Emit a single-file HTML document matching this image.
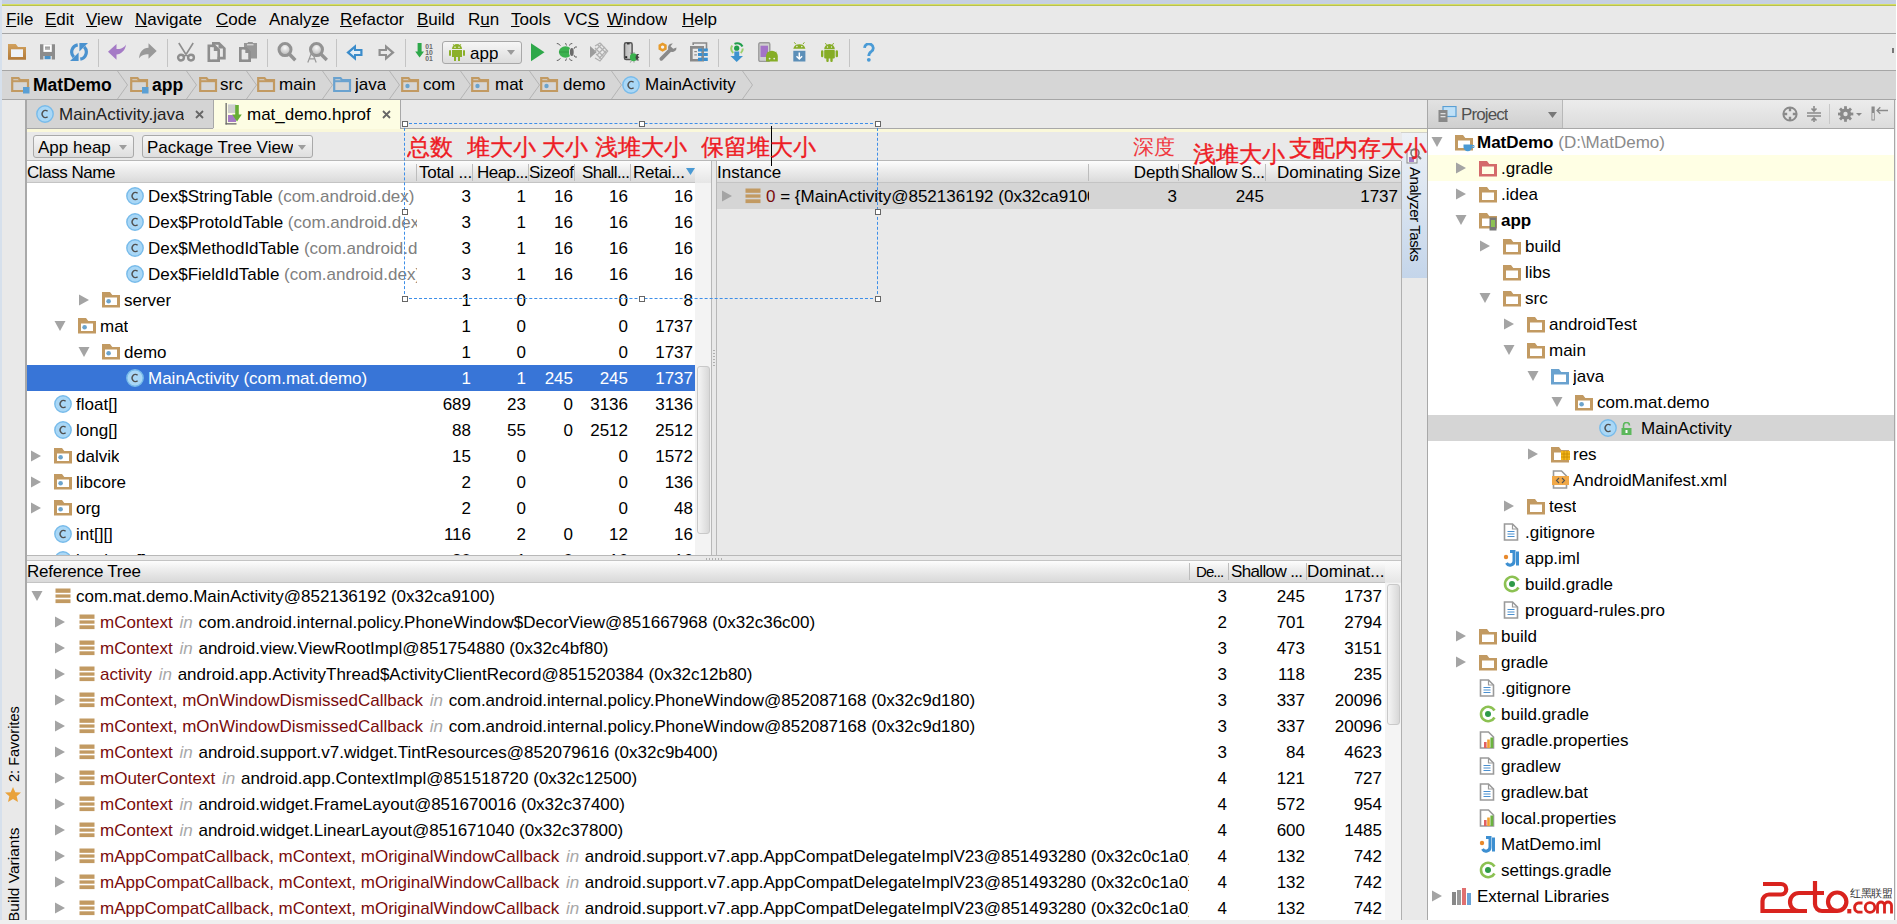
<!DOCTYPE html><html><head><meta charset="utf-8"><style>
html,body{margin:0;padding:0}
body{width:1897px;height:924px;overflow:hidden;position:relative;background:#e9e9e9;font-family:"Liberation Sans",sans-serif;font-size:17px;color:#000}
.a{position:absolute}
.t{position:absolute;white-space:nowrap;overflow:hidden}
u{text-decoration:underline;text-underline-offset:1px}
</style></head><body><div class="a" style="left:0px;top:0px;width:1897px;height:5px;background:#c6d0e2"></div><div class="a" style="left:2px;top:4px;width:1894px;height:1px;background:#d6df62"></div><div class="a" style="left:2px;top:5px;width:1894px;height:1px;background:#b8c052"></div><div class="a" style="left:0px;top:0px;width:2px;height:924px;background:#d6e0ec"></div><div class="a" style="left:1896px;top:0px;width:1px;height:924px;background:#ffffff"></div><div class="a" style="left:2px;top:6px;width:1894px;height:27px;background:#e9e9e9"></div><div class="a" style="left:2px;top:33px;width:1894px;height:1px;background:#a6a6a6"></div><div class="t" style="left:6px;top:6px;height:27px;line-height:27px;color:#000"><u>F</u>ile</div><div class="t" style="left:45px;top:6px;height:27px;line-height:27px;color:#000"><u>E</u>dit</div><div class="t" style="left:86px;top:6px;height:27px;line-height:27px;color:#000"><u>V</u>iew</div><div class="t" style="left:135px;top:6px;height:27px;line-height:27px;color:#000"><u>N</u>avigate</div><div class="t" style="left:216px;top:6px;height:27px;line-height:27px;color:#000"><u>C</u>ode</div><div class="t" style="left:269px;top:6px;height:27px;line-height:27px;color:#000">Analy<u>z</u>e</div><div class="t" style="left:340px;top:6px;height:27px;line-height:27px;color:#000"><u>R</u>efactor</div><div class="t" style="left:417px;top:6px;height:27px;line-height:27px;color:#000"><u>B</u>uild</div><div class="t" style="left:468px;top:6px;height:27px;line-height:27px;color:#000">R<u>u</u>n</div><div class="t" style="left:511px;top:6px;height:27px;line-height:27px;color:#000"><u>T</u>ools</div><div class="t" style="left:564px;top:6px;height:27px;line-height:27px;color:#000">VC<u>S</u></div><div class="t" style="left:607px;top:6px;height:27px;line-height:27px;color:#000"><u>W</u>indow</div><div class="t" style="left:682px;top:6px;height:27px;line-height:27px;color:#000"><u>H</u>elp</div><div class="a" style="left:2px;top:70px;width:1894px;height:1px;background:#a6a6a6"></div><div class="a" style="left:98px;top:39px;width:1px;height:28px;background:#c4c4c4"></div><div class="a" style="left:167px;top:39px;width:1px;height:28px;background:#c4c4c4"></div><div class="a" style="left:267px;top:39px;width:1px;height:28px;background:#c4c4c4"></div><div class="a" style="left:336px;top:39px;width:1px;height:28px;background:#c4c4c4"></div><div class="a" style="left:405px;top:39px;width:1px;height:28px;background:#c4c4c4"></div><div class="a" style="left:649px;top:39px;width:1px;height:28px;background:#c4c4c4"></div><div class="a" style="left:718px;top:39px;width:1px;height:28px;background:#c4c4c4"></div><div class="a" style="left:849px;top:39px;width:1px;height:28px;background:#c4c4c4"></div><div class="a" style="left:2px;top:71px;width:1894px;height:28px;background:#d6d6d6"></div><div class="a" style="left:2px;top:99px;width:1894px;height:1px;background:#a6a6a6"></div><div class="a" style="left:2px;top:100px;width:23px;height:820px;background:#e9e9e9"></div><svg class="a" style="left:8px;top:44px;" width="18" height="16" viewBox="0 0 18 16"><defs><linearGradient id="fg" x1="0" y1="0" x2="0" y2="1"><stop offset="0" stop-color="#d2a25e"/><stop offset="1" stop-color="#b27a3a"/></linearGradient></defs><path fill-rule="evenodd" d="M0 0 H7.8 L10 3 H18 V15.7 H0 Z M3 5.5 H15 V13 H3 Z" fill="url(#fg)"/><rect x="3" y="5.5" width="12" height="7.5" fill="#eef2f8"/></svg><svg class="a" style="left:40px;top:44px;" width="15" height="16" viewBox="0 0 15 16"><path d="M0 0.3 H15 V15.5 H11.8 V12 H3.4 V15.5 H0 Z" fill="#8c8c8c"/><rect x="3.4" y="0.3" width="8.4" height="7.6" fill="#fff"/><rect x="5" y="2.6" width="5" height="1.1" fill="#777"/><rect x="5" y="4.4" width="5" height="1.1" fill="#777"/><rect x="4.6" y="12" width="6" height="3.2" fill="#4a92c8"/></svg><svg class="a" style="left:70px;top:43px;" width="18" height="18" viewBox="0 0 18 18"><g stroke="#4a92cf" stroke-width="3.2" fill="none"><path d="M7.73 1.81 A7.3 7.3 0 0 0 3.84 14.16"/><path d="M10.27 16.19 A7.3 7.3 0 0 0 14.16 3.84"/></g><path d="M0 18 L8.6 18 L8.6 9.4 Z M18 0 L9.4 0 L9.4 8.6 Z" fill="#4a92cf"/></svg><svg class="a" style="left:108px;top:44px;" width="18" height="16" viewBox="0 0 18 16"><path d="M0 7.8 L8.5 0 V5.1 C12 5.1 16 4 18 0.4 C17.5 6 13 10.4 8.5 10.4 V15.7 Z" fill="#a57bc6"/></svg><svg class="a" style="left:139px;top:43px;" width="18" height="16" viewBox="0 0 18 16"><path d="M17.7 8 L9.5 0.2 V4.7 C4 4.7 0.5 9 0 15.5 C2 12.2 5 11.2 9.5 11.2 V15.8 Z" fill="#999"/></svg><svg class="a" style="left:176px;top:42px;" width="20" height="20" viewBox="0 0 20 20"><path d="M2.8 1 L10 12.5 M17.2 1 L10 12.5" stroke="#8e8e8e" stroke-width="1.6"/><circle cx="5" cy="15.6" r="2.9" fill="none" stroke="#8e8e8e" stroke-width="2.4"/><circle cx="15" cy="15.6" r="2.9" fill="none" stroke="#8e8e8e" stroke-width="2.4"/><path d="M7.3 13.6 L12.7 13.6" stroke="#8e8e8e" stroke-width="1.4"/></svg><svg class="a" style="left:207px;top:42px;" width="19" height="20" viewBox="0 0 19 20"><path fill-rule="evenodd" d="M5 0 H12.5 L18.7 6 V17.5 H5 Z M7.8 2.7 H11.5 V6.5 H15.9 V14.8 H7.8 Z" fill="#8e8e8e"/><path fill-rule="evenodd" d="M0.5 2.5 H8 L13 7.5 V20 H0.5 Z M3.3 5.2 H6.8 V9 H10.2 V17.3 H3.3 Z" fill="#8e8e8e"/><path d="M3.3 5.2 H6.8 V9 H10.2 V17.3 H3.3 Z" fill="#e9e9e9"/></svg><svg class="a" style="left:239px;top:42px;" width="18" height="20" viewBox="0 0 18 20"><rect x="5" y="1" width="13" height="15.5" fill="#979797"/><rect x="8.8" y="0" width="5" height="2.5" fill="#979797"/><rect x="8" y="2.3" width="6.5" height="1" fill="#e9e9e9"/><path fill-rule="evenodd" d="M0 5 H7.5 L12 9.5 V20 H0 Z M2.8 7.8 H6.3 V11 H9.2 V17.3 H2.8 Z" fill="#8e8e8e"/><path d="M2.8 7.8 H6.3 V11 H9.2 V17.3 H2.8 Z" fill="#e9e9e9"/></svg><svg class="a" style="left:277px;top:42px;" width="20" height="20" viewBox="0 0 20 20"><defs><radialGradient id="lg" cx="0.5" cy="0.35" r="0.6"><stop offset="0" stop-color="#fafafa"/><stop offset="1" stop-color="#b8b8b8"/></radialGradient></defs><circle cx="8" cy="7.6" r="6" fill="url(#lg)" stroke="#939393" stroke-width="3"/><path d="M12.3 12 L18.3 18.2" stroke="#939393" stroke-width="3.4"/></svg><svg class="a" style="left:307px;top:42px;" width="21" height="21" viewBox="0 0 21 21"><circle cx="9.5" cy="7.6" r="6" fill="url(#lg)" stroke="#939393" stroke-width="3"/><path d="M13.8 12 L19.8 18" stroke="#939393" stroke-width="3.4"/><path d="M0.8 20.5 L5 9.5 L9.2 20.5 M2.4 16.8 H7.6" fill="none" stroke="#9a9a9a" stroke-width="1.2"/></svg><svg class="a" style="left:346px;top:44px;" width="17" height="17" viewBox="0 0 17 17"><path d="M0.3 8.5 L10 0.3 V5 H16.5 V12 H10 V16.7 Z" fill="#3b8ccb"/><path d="M3.8 8.5 L8 4.9 V7 H14.3 V10 H8 V12.1 Z" fill="#e4eef6"/></svg><svg class="a" style="left:378px;top:44px;" width="17" height="17" viewBox="0 0 17 17"><path d="M16.7 8.5 L7 0.3 V5 H0.5 V12 H7 V16.7 Z" fill="#8f8f8f"/><path d="M13.2 8.5 L9 4.9 V7 H2.7 V10 H9 V12.1 Z" fill="#e9e9e9"/></svg><svg class="a" style="left:415px;top:42px;" width="20" height="20" viewBox="0 0 20 20"><path d="M2.6 1 H6.6 V9.5 H9 L4.6 15.5 L0.2 9.5 H2.6 Z" fill="#2ea84a"/><text x="10.2" y="6.8" font-size="6.8" font-weight="bold" fill="#6a6a6a" font-family="Liberation Sans">01</text><text x="10.2" y="13" font-size="6.8" font-weight="bold" fill="#6a6a6a" font-family="Liberation Sans">10</text><text x="10.2" y="19.2" font-size="6.8" font-weight="bold" fill="#6a6a6a" font-family="Liberation Sans">01</text></svg><div class="a" style="left:442px;top:41px;width:80px;height:23px;background:linear-gradient(#f6f6f6,#dcdcdc);border:1px solid #a8a8a8;border-radius:3px;box-sizing:border-box"></div><svg class="a" style="left:449px;top:43px;" width="16" height="18" viewBox="0 0 16 18"><g transform="scale(1.0,1.0)"><path d="M3 6 A5 5 0 0 1 13 6 Z" fill="#8cb02a"/><rect x="3" y="7" width="10" height="7" fill="#8cb02a"/><rect x="0" y="7" width="2" height="6" rx="1" fill="#8cb02a"/><rect x="14" y="7" width="2" height="6" rx="1" fill="#8cb02a"/><rect x="5" y="13" width="2" height="5" fill="#8cb02a"/><rect x="9" y="13" width="2" height="5" fill="#8cb02a"/><path d="M4 1 L5.5 3 M12 1 L10.5 3" stroke="#8cb02a" stroke-width="0.8"/><circle cx="6" cy="4.3" r="0.7" fill="#fff"/><circle cx="10" cy="4.3" r="0.7" fill="#fff"/></g></svg><div class="t" style="left:470px;top:41px;height:26px;line-height:26px;font-size:17px">app</div><svg class="a" style="left:507px;top:50px;" width="8" height="5" viewBox="0 0 8 5"><path d="M0 0 H8 L4 5 Z" fill="#9a9a9a"/></svg><svg class="a" style="left:531px;top:43px;" width="14" height="19" viewBox="0 0 14 19"><path d="M0 0.3 L13.5 9.3 L0 18.3 Z" fill="#2ea84a"/></svg><svg class="a" style="left:556px;top:42px;" width="22" height="20" viewBox="0 0 22 20"><g stroke="#555" stroke-width="0.9" fill="none"><path d="M4.5 3.5 L2 1.6 L0.8 1.6 M10.5 3.5 L9.5 1 M13 3.5 L15 1.6 L16.3 1.6 M4.5 16.5 L2 18.4 L0.8 18.4 M10.5 16.5 L9.5 19 M13 16.5 L15 18.4 L16.3 18.4 M21 5 L19 5 L17.5 7.5 M21 15 L19 15 L17.5 12.5"/></g><ellipse cx="9.5" cy="10" rx="6.6" ry="5.8" fill="#3bb14e"/><path d="M3 10 H14" stroke="#2a8a3a" stroke-width="0.6"/><ellipse cx="15.6" cy="10" rx="2.6" ry="4.6" fill="#e9e9e9"/><ellipse cx="15.8" cy="10" rx="1.9" ry="4" fill="#6a6a6a"/></svg><svg class="a" style="left:589px;top:42px;" width="20" height="20" viewBox="0 0 20 20"><path d="M1 3.9 L7.8 10 L1 16 Z" fill="#9c9c9c"/><g fill="none" stroke="#b0b0b0" stroke-width="1.2"><path d="M6 4 L11 1 L18.7 9 L11 19 L6 16"/><path d="M8.5 2.5 L17 11 M6 6 L15 15 M7 12 L13 17.5 M13 1.8 L5.5 9.5 M16 5 L8 13 M18 8 L10 16.5"/></g></svg><svg class="a" style="left:623px;top:42px;" width="17" height="21" viewBox="0 0 17 21"><defs><linearGradient id="pg" x1="0" y1="0" x2="1" y2="0"><stop offset="0" stop-color="#b8b8b8"/><stop offset="1" stop-color="#d8d8d8"/></linearGradient></defs><rect x="1.5" y="0.8" width="7.6" height="16.8" rx="1.6" fill="url(#pg)" stroke="#555" stroke-width="1.5"/><rect x="4" y="1.2" width="2.6" height="1.2" fill="#222"/><rect x="2.2" y="14.2" width="2" height="2" fill="#222"/><ellipse cx="10.5" cy="15.3" rx="3.6" ry="4" fill="#3bb14e"/><path d="M13.5 12.5 L15.8 12.5 M13.8 15.3 H16.2 M13.5 18 L15.8 18 M8 11.5 L7.5 10.8 M11 11 L11 10.5 M8 19.5 L7.5 20.3 M11 19.6 V20.3" stroke="#333" stroke-width="0.9"/><ellipse cx="14" cy="15.3" rx="1.4" ry="2.6" fill="#444"/></svg><svg class="a" style="left:658px;top:42px;" width="20" height="20" viewBox="0 0 20 20"><path d="M4.6 0.5 L8.7 2.8 V7.4 L4.6 9.7 L0.5 7.4 V2.8 Z" fill="#e79b2c"/><circle cx="4.6" cy="5.1" r="1.7" fill="#f5f5f5"/><path d="M18.5 5.5 A4.2 4.2 0 0 1 13 9.8 L4.6 18.2 A1.6 1.6 0 0 1 2 15.6 L10.3 7.2 A4.2 4.2 0 0 1 14.8 1.5 L12.5 4.3 L15.2 6.8 Z" fill="#8a8a8a"/></svg><svg class="a" style="left:690px;top:42px;" width="19" height="20" viewBox="0 0 19 20"><path d="M3.2 3 V1 H16.5 V8" fill="none" stroke="#8a8a8a" stroke-width="1.6"/><path fill-rule="evenodd" d="M0 4 H14 V19.5 H0 Z M2.7 6.7 H11.3 V17 H2.7 Z" fill="#8a8a8a"/><g fill="#3a8fcf"><rect x="8" y="6.5" width="4.3" height="3"/><rect x="13.5" y="6.5" width="4.3" height="3"/><rect x="8" y="11" width="4.3" height="3"/><rect x="13.5" y="11" width="4.3" height="3"/><rect x="8" y="15.7" width="4.3" height="3.3"/><rect x="13.5" y="15.7" width="4.3" height="3.3"/></g><rect x="4.3" y="9" width="2.6" height="1.2" fill="#8a8a8a"/><rect x="4.3" y="12.3" width="2.6" height="1.2" fill="#8a8a8a"/></svg><svg class="a" style="left:730px;top:42px;" width="14" height="20" viewBox="0 0 14 20"><path d="M3.3 11 A6 6 0 0 1 2.2 3.5" fill="none" stroke="#9bd06c" stroke-width="2"/><path d="M4.5 1.8 A6 6 0 0 1 12.5 4.5" fill="none" stroke="#1f9e4a" stroke-width="2"/><path d="M12.8 6.5 A6 6 0 0 1 10.7 11" fill="none" stroke="#9bd06c" stroke-width="2"/><circle cx="6.7" cy="6.2" r="2.6" fill="#1f9e4a"/><path d="M4.3 9.5 H9.2 V14 H13 L6.7 20 L0.5 14 H4.3 Z" fill="#3d93cf"/></svg><svg class="a" style="left:758px;top:42px;" width="21" height="20" viewBox="0 0 21 20"><rect x="0.8" y="0.8" width="11" height="18.6" rx="1.4" fill="#cfcfcf" stroke="#9a9a9a" stroke-width="1.4"/><rect x="2.5" y="3.7" width="7.5" height="11.3" fill="#a373c7"/><path d="M8 14 A5.5 5 0 0 1 19.8 14 V19.5 H8 Z" fill="#86ad26"/><path d="M9.6 9.8 L10.8 11.8 M18.2 9.8 L17 11.8" stroke="#86ad26" stroke-width="1"/><circle cx="11.6" cy="16.6" r="0.9" fill="#e9e9e9"/><circle cx="16.2" cy="16.6" r="0.9" fill="#e9e9e9"/></svg><svg class="a" style="left:793px;top:42px;" width="13" height="20" viewBox="0 0 13 20"><path d="M0.3 6.7 A6.2 5.6 0 0 1 12.4 6.7 Z" fill="#86ad26"/><path d="M1.3 0.3 L2.8 2.2 M11.4 0.3 L9.9 2.2" stroke="#86ad26" stroke-width="1"/><circle cx="3.9" cy="4.6" r="0.8" fill="#e9e9e9"/><circle cx="8.8" cy="4.6" r="0.8" fill="#e9e9e9"/><rect x="0.3" y="8.8" width="12.1" height="10.7" fill="#5c8fb8"/><path d="M6.3 10.5 V17 M3.5 14.2 L6.3 17 L9.1 14.2" fill="none" stroke="#fff" stroke-width="1.5"/></svg><svg class="a" style="left:821px;top:42px;" width="17" height="20" viewBox="0 0 17 20"><path d="M3.2 7.2 A5.3 5.3 0 0 1 13.8 7.2 Z" fill="#86ad26"/><path d="M4.3 1 L5.6 3 M12.7 1 L11.4 3" stroke="#86ad26" stroke-width="0.9"/><circle cx="6.5" cy="5" r="0.7" fill="#e9e9e9"/><circle cx="10.5" cy="5" r="0.7" fill="#e9e9e9"/><rect x="3.2" y="8" width="10.6" height="8.4" rx="0.8" fill="#86ad26"/><rect x="0" y="8.3" width="2.4" height="7" rx="1.2" fill="#86ad26"/><rect x="14.6" y="8.3" width="2.4" height="7" rx="1.2" fill="#86ad26"/><rect x="5.3" y="15.5" width="2.4" height="4.4" rx="1" fill="#86ad26"/><rect x="9.3" y="15.5" width="2.4" height="4.4" rx="1" fill="#86ad26"/></svg><svg class="a" style="left:863px;top:43px;" width="12" height="19" viewBox="0 0 12 19"><path d="M1.5 4.8 A4.4 4.2 0 1 1 8.2 8.6 C6.4 9.8 5.8 10.8 5.8 13" fill="none" stroke="#4a9bd6" stroke-width="2.8"/><circle cx="5.8" cy="16.8" r="1.9" fill="#4a9bd6"/></svg><div class="a" style="left:1892px;top:48px;width:2px;height:5px;background:#777"></div><svg class="a" style="left:11px;top:77px;" width="19" height="17" viewBox="0 0 19 17"><path d="M1.2 14 V1.2 H7.5 L9.2 3.2 H17 V14 Z" fill="none" stroke="#c29a62" stroke-width="2.2"/><rect x="1" y="3.2" width="16.5" height="2" fill="#c29a62"/><rect x="12" y="10" width="6.5" height="6.5" fill="#5a9fd4"/></svg><div class="t" style="left:33px;top:72px;height:26px;line-height:26px;font-weight:bold;font-size:17.5px">MatDemo</div><svg class="a" style="left:117px;top:71px;" width="12" height="28" viewBox="0 0 12 28"><path d="M0.5 0 L10.5 14 L0.5 28" fill="none" stroke="#b4b4b4" stroke-width="1"/></svg><svg class="a" style="left:130px;top:77px;" width="19" height="17" viewBox="0 0 19 17"><path d="M1.2 14 V1.2 H7.5 L9.2 3.2 H17 V14 Z" fill="none" stroke="#c29a62" stroke-width="2.2"/><rect x="1" y="3.2" width="16.5" height="2" fill="#c29a62"/><rect x="12" y="10" width="6.5" height="6.5" fill="#5a9fd4"/></svg><div class="t" style="left:152px;top:72px;height:26px;line-height:26px;font-weight:bold;font-size:17.5px">app</div><svg class="a" style="left:186px;top:71px;" width="12" height="28" viewBox="0 0 12 28"><path d="M0.5 0 L10.5 14 L0.5 28" fill="none" stroke="#b4b4b4" stroke-width="1"/></svg><svg class="a" style="left:199px;top:77px;" width="19" height="17" viewBox="0 0 19 17"><path d="M1.2 14 V1.2 H7.5 L9.2 3.2 H17 V14 Z" fill="none" stroke="#c29a62" stroke-width="2.2"/><rect x="1" y="3.2" width="16.5" height="2" fill="#c29a62"/></svg><div class="t" style="left:220px;top:72px;height:26px;line-height:26px;">src</div><svg class="a" style="left:246px;top:71px;" width="12" height="28" viewBox="0 0 12 28"><path d="M0.5 0 L10.5 14 L0.5 28" fill="none" stroke="#b4b4b4" stroke-width="1"/></svg><svg class="a" style="left:257px;top:77px;" width="19" height="17" viewBox="0 0 19 17"><path d="M1.2 14 V1.2 H7.5 L9.2 3.2 H17 V14 Z" fill="none" stroke="#c29a62" stroke-width="2.2"/><rect x="1" y="3.2" width="16.5" height="2" fill="#c29a62"/></svg><div class="t" style="left:279px;top:72px;height:26px;line-height:26px;">main</div><svg class="a" style="left:322px;top:71px;" width="12" height="28" viewBox="0 0 12 28"><path d="M0.5 0 L10.5 14 L0.5 28" fill="none" stroke="#b4b4b4" stroke-width="1"/></svg><svg class="a" style="left:333px;top:77px;" width="19" height="17" viewBox="0 0 19 17"><path d="M1.2 14 V1.2 H7.5 L9.2 3.2 H17 V14 Z" fill="none" stroke="#6aa2cf" stroke-width="2.2"/><rect x="1" y="3.2" width="16.5" height="2" fill="#6aa2cf"/></svg><div class="t" style="left:355px;top:72px;height:26px;line-height:26px;">java</div><svg class="a" style="left:389px;top:71px;" width="12" height="28" viewBox="0 0 12 28"><path d="M0.5 0 L10.5 14 L0.5 28" fill="none" stroke="#b4b4b4" stroke-width="1"/></svg><svg class="a" style="left:401px;top:77px;" width="19" height="17" viewBox="0 0 19 17"><path d="M1.2 14 V1.2 H7.5 L9.2 3.2 H17 V14 Z" fill="none" stroke="#c29a62" stroke-width="2.2"/><rect x="1" y="3.2" width="16.5" height="2" fill="#c29a62"/><circle cx="6.5" cy="9" r="2.2" fill="#6ba3cc"/></svg><div class="t" style="left:423px;top:72px;height:26px;line-height:26px;">com</div><svg class="a" style="left:460px;top:71px;" width="12" height="28" viewBox="0 0 12 28"><path d="M0.5 0 L10.5 14 L0.5 28" fill="none" stroke="#b4b4b4" stroke-width="1"/></svg><svg class="a" style="left:471px;top:77px;" width="19" height="17" viewBox="0 0 19 17"><path d="M1.2 14 V1.2 H7.5 L9.2 3.2 H17 V14 Z" fill="none" stroke="#c29a62" stroke-width="2.2"/><rect x="1" y="3.2" width="16.5" height="2" fill="#c29a62"/><circle cx="6.5" cy="9" r="2.2" fill="#6ba3cc"/></svg><div class="t" style="left:495px;top:72px;height:26px;line-height:26px;">mat</div><svg class="a" style="left:529px;top:71px;" width="12" height="28" viewBox="0 0 12 28"><path d="M0.5 0 L10.5 14 L0.5 28" fill="none" stroke="#b4b4b4" stroke-width="1"/></svg><svg class="a" style="left:540px;top:77px;" width="19" height="17" viewBox="0 0 19 17"><path d="M1.2 14 V1.2 H7.5 L9.2 3.2 H17 V14 Z" fill="none" stroke="#c29a62" stroke-width="2.2"/><rect x="1" y="3.2" width="16.5" height="2" fill="#c29a62"/><circle cx="6.5" cy="9" r="2.2" fill="#6ba3cc"/></svg><div class="t" style="left:563px;top:72px;height:26px;line-height:26px;">demo</div><svg class="a" style="left:611px;top:71px;" width="12" height="28" viewBox="0 0 12 28"><path d="M0.5 0 L10.5 14 L0.5 28" fill="none" stroke="#b4b4b4" stroke-width="1"/></svg><svg class="a" style="left:622px;top:76px;" width="18" height="18" viewBox="0 0 18 18"><circle cx="9" cy="9" r="8.2" fill="#a9d7f6" stroke="#78bbea" stroke-width="1.4"/><path d="M11.6 6.3 A3.3 3.6 0 1 0 11.6 11.7" fill="none" stroke="#505050" stroke-width="1.3"/></svg><div class="t" style="left:645px;top:72px;height:26px;line-height:26px;">MainActivity</div><svg class="a" style="left:742px;top:71px;" width="12" height="28" viewBox="0 0 12 28"><path d="M0.5 0 L10.5 14 L0.5 28" fill="none" stroke="#b4b4b4" stroke-width="1"/></svg><div class="a" style="left:26px;top:100px;width:1401px;height:28px;background:#e9e9e9"></div><div class="a" style="left:26px;top:100px;width:187px;height:28px;background:#d4d4d4"></div><div class="a" style="left:213px;top:100px;width:1px;height:28px;background:#a8a8a8"></div><div class="a" style="left:26px;top:128px;width:187px;height:1px;background:#a8a8a8"></div><div class="a" style="left:400px;top:128px;width:1027px;height:1px;background:#a8a8a8"></div><div class="a" style="left:214px;top:100px;width:186px;height:32px;background:#fdfde3"></div><div class="a" style="left:400px;top:100px;width:1px;height:29px;background:#a8a8a8"></div><div class="a" style="left:26px;top:129px;width:1401px;height:3px;background:#faf8da"></div><div class="a" style="left:26px;top:132px;width:1401px;height:1px;background:#d2d2cc"></div><svg class="a" style="left:36px;top:105px;" width="18" height="18" viewBox="0 0 18 18"><circle cx="9" cy="9" r="8.2" fill="#a9d7f6" stroke="#78bbea" stroke-width="1.4"/><path d="M11.6 6.3 A3.3 3.6 0 1 0 11.6 11.7" fill="none" stroke="#505050" stroke-width="1.3"/></svg><div class="t" style="left:59px;top:102px;height:26px;line-height:26px;color:#222">MainActivity.java</div><svg class="a" style="left:195px;top:110px;" width="9" height="9" viewBox="0 0 9 9"><path d="M1 1 L8 8 M8 1 L1 8" stroke="#666" stroke-width="1.8"/></svg><svg class="a" style="left:225px;top:103px;" width="18" height="22" viewBox="0 0 18 22"><rect x="0.5" y="0" width="1.3" height="21.5" fill="#6a6a6a"/><rect x="0.5" y="20.2" width="11" height="1.3" fill="#6a6a6a"/><rect x="3" y="1" width="8" height="9" fill="#cdcdcd"/><rect x="3" y="1" width="8" height="1" fill="#e0e0e0"/><path d="M3 12 H9 L11 14 V19 H3 Z" fill="#a57bc6"/><path d="M10.2 2 H13.8 V11.5 H16.8 L12 18.5 L7.2 11.5 H10.2 Z" fill="#67ad35"/></svg><div class="t" style="left:247px;top:102px;height:26px;line-height:26px;color:#000">mat_demo.hprof</div><svg class="a" style="left:382px;top:110px;" width="9" height="9" viewBox="0 0 9 9"><path d="M1 1 L8 8 M8 1 L1 8" stroke="#666" stroke-width="1.8"/></svg><div class="a" style="left:26px;top:132px;width:1375px;height:28px;background:#e9e9e9"></div><div class="a" style="left:26px;top:160px;width:1375px;height:1px;background:#b8b8b8"></div><div class="a" style="left:33px;top:135px;width:101px;height:23px;background:linear-gradient(#f7f7f7,#dedede);border:1px solid #a9a9a9;border-radius:3px;box-sizing:border-box"></div><div class="t" style="left:38px;top:135px;height:26px;line-height:26px;">App heap</div><svg class="a" style="left:119px;top:145px;" width="8" height="5" viewBox="0 0 8 5"><path d="M0 0 H8 L4 5 Z" fill="#9d9d9d"/></svg><div class="a" style="left:142px;top:135px;width:171px;height:23px;background:linear-gradient(#f7f7f7,#dedede);border:1px solid #a9a9a9;border-radius:3px;box-sizing:border-box"></div><div class="t" style="left:147px;top:135px;height:26px;line-height:26px;">Package Tree View</div><svg class="a" style="left:298px;top:145px;" width="8" height="5" viewBox="0 0 8 5"><path d="M0 0 H8 L4 5 Z" fill="#9d9d9d"/></svg><div class="a" style="left:26px;top:161px;width:669px;height:22px;background:linear-gradient(#fdfdfd,#ededed 40%,#d9d9d9)"></div><div class="a" style="left:26px;top:182px;width:669px;height:1px;background:#c4c4c4"></div><div class="a" style="left:26px;top:183px;width:669px;height:373px;background:#fff"></div><div class="t" style="left:27px;top:160px;height:26px;line-height:26px;letter-spacing:-0.46px">Class Name</div><div class="a" style="left:416px;top:164px;width:1px;height:17px;background:#bdbdbd"></div><div class="a" style="left:472px;top:164px;width:1px;height:17px;background:#bdbdbd"></div><div class="a" style="left:528px;top:164px;width:1px;height:17px;background:#bdbdbd"></div><div class="a" style="left:574px;top:164px;width:1px;height:17px;background:#bdbdbd"></div><div class="a" style="left:630px;top:164px;width:1px;height:17px;background:#bdbdbd"></div><div class="t" style="left:419px;top:160px;height:26px;line-height:26px;width:53px;letter-spacing:-0.2px">Total ...</div><div class="t" style="left:477px;top:160px;height:26px;line-height:26px;width:51px;letter-spacing:-0.55px">Heap...</div><div class="t" style="left:529px;top:160px;height:26px;line-height:26px;width:45px;letter-spacing:-0.47px">Sizeof</div><div class="t" style="left:582px;top:160px;height:26px;line-height:26px;width:48px;letter-spacing:-0.58px">Shall...</div><div class="t" style="left:633px;top:160px;height:26px;line-height:26px;letter-spacing:-0.27px">Retai...</div><svg class="a" style="left:686px;top:168px;" width="9" height="7" viewBox="0 0 9 7"><path d="M0 0 H9 L4.5 7 Z" fill="#4a9ad4"/></svg><div class="a" style="left:695px;top:161px;width:16px;height:22px;background:linear-gradient(#fbfbfb,#e6e6e6)"></div><div class="a" style="left:695px;top:183px;width:16px;height:373px;background:#f3f3f3"></div><div class="a" style="left:697px;top:366px;width:13px;height:168px;background:linear-gradient(90deg,#f5f5f5,#d8d8d8);border:1px solid #c9c9c9;border-radius:3px;box-sizing:border-box"></div><div class="a" style="left:711px;top:161px;width:1px;height:395px;background:#b8b8b8"></div><div class="a" style="left:716px;top:161px;width:1px;height:395px;background:#b8b8b8"></div><div class="a" style="left:713px;top:350px;width:2px;height:1px;background:#b0b0b0"></div><div class="a" style="left:713px;top:353px;width:2px;height:1px;background:#b0b0b0"></div><div class="a" style="left:713px;top:356px;width:2px;height:1px;background:#b0b0b0"></div><div class="a" style="left:713px;top:359px;width:2px;height:1px;background:#b0b0b0"></div><div class="a" style="left:713px;top:362px;width:2px;height:1px;background:#b0b0b0"></div><div class="a" style="left:713px;top:365px;width:2px;height:1px;background:#b0b0b0"></div><div class="a" style="left:26px;top:183px;width:391px;height:26px;overflow:hidden"><svg class="a" style="left:100px;top:4px;" width="18" height="18" viewBox="0 0 18 18"><circle cx="9" cy="9" r="8.2" fill="#a9d7f6" stroke="#78bbea" stroke-width="1.4"/><path d="M11.6 6.3 A3.3 3.6 0 1 0 11.6 11.7" fill="none" stroke="#505050" stroke-width="1.3"/></svg><div class="t" style="left:122px;top:1px;height:26px;line-height:26px;color:#000">Dex$StringTable<span style="color:#808080"> (com.android.dex)</span></div></div><div class="t" style="left:421px;top:184px;width:50px;height:26px;line-height:26px;text-align:right;color:#000">3</div><div class="t" style="left:476px;top:184px;width:50px;height:26px;line-height:26px;text-align:right;color:#000">1</div><div class="t" style="left:523px;top:184px;width:50px;height:26px;line-height:26px;text-align:right;color:#000">16</div><div class="t" style="left:578px;top:184px;width:50px;height:26px;line-height:26px;text-align:right;color:#000">16</div><div class="t" style="left:643px;top:184px;width:50px;height:26px;line-height:26px;text-align:right;color:#000">16</div><div class="a" style="left:26px;top:209px;width:391px;height:26px;overflow:hidden"><svg class="a" style="left:100px;top:4px;" width="18" height="18" viewBox="0 0 18 18"><circle cx="9" cy="9" r="8.2" fill="#a9d7f6" stroke="#78bbea" stroke-width="1.4"/><path d="M11.6 6.3 A3.3 3.6 0 1 0 11.6 11.7" fill="none" stroke="#505050" stroke-width="1.3"/></svg><div class="t" style="left:122px;top:1px;height:26px;line-height:26px;color:#000">Dex$ProtoIdTable<span style="color:#808080"> (com.android.dex)</span></div></div><div class="t" style="left:421px;top:210px;width:50px;height:26px;line-height:26px;text-align:right;color:#000">3</div><div class="t" style="left:476px;top:210px;width:50px;height:26px;line-height:26px;text-align:right;color:#000">1</div><div class="t" style="left:523px;top:210px;width:50px;height:26px;line-height:26px;text-align:right;color:#000">16</div><div class="t" style="left:578px;top:210px;width:50px;height:26px;line-height:26px;text-align:right;color:#000">16</div><div class="t" style="left:643px;top:210px;width:50px;height:26px;line-height:26px;text-align:right;color:#000">16</div><div class="a" style="left:26px;top:235px;width:391px;height:26px;overflow:hidden"><svg class="a" style="left:100px;top:4px;" width="18" height="18" viewBox="0 0 18 18"><circle cx="9" cy="9" r="8.2" fill="#a9d7f6" stroke="#78bbea" stroke-width="1.4"/><path d="M11.6 6.3 A3.3 3.6 0 1 0 11.6 11.7" fill="none" stroke="#505050" stroke-width="1.3"/></svg><div class="t" style="left:122px;top:1px;height:26px;line-height:26px;color:#000">Dex$MethodIdTable<span style="color:#808080"> (com.android.dex)</span></div></div><div class="t" style="left:421px;top:236px;width:50px;height:26px;line-height:26px;text-align:right;color:#000">3</div><div class="t" style="left:476px;top:236px;width:50px;height:26px;line-height:26px;text-align:right;color:#000">1</div><div class="t" style="left:523px;top:236px;width:50px;height:26px;line-height:26px;text-align:right;color:#000">16</div><div class="t" style="left:578px;top:236px;width:50px;height:26px;line-height:26px;text-align:right;color:#000">16</div><div class="t" style="left:643px;top:236px;width:50px;height:26px;line-height:26px;text-align:right;color:#000">16</div><div class="a" style="left:26px;top:261px;width:391px;height:26px;overflow:hidden"><svg class="a" style="left:100px;top:4px;" width="18" height="18" viewBox="0 0 18 18"><circle cx="9" cy="9" r="8.2" fill="#a9d7f6" stroke="#78bbea" stroke-width="1.4"/><path d="M11.6 6.3 A3.3 3.6 0 1 0 11.6 11.7" fill="none" stroke="#505050" stroke-width="1.3"/></svg><div class="t" style="left:122px;top:1px;height:26px;line-height:26px;color:#000">Dex$FieldIdTable<span style="color:#808080"> (com.android.dex)</span></div></div><div class="t" style="left:421px;top:262px;width:50px;height:26px;line-height:26px;text-align:right;color:#000">3</div><div class="t" style="left:476px;top:262px;width:50px;height:26px;line-height:26px;text-align:right;color:#000">1</div><div class="t" style="left:523px;top:262px;width:50px;height:26px;line-height:26px;text-align:right;color:#000">16</div><div class="t" style="left:578px;top:262px;width:50px;height:26px;line-height:26px;text-align:right;color:#000">16</div><div class="t" style="left:643px;top:262px;width:50px;height:26px;line-height:26px;text-align:right;color:#000">16</div><div class="a" style="left:26px;top:287px;width:391px;height:26px;overflow:hidden"><svg class="a" style="left:53px;top:7px;" width="10" height="12" viewBox="0 0 10 12"><path d="M0 0.5 L10 6 L0 11.5 Z" fill="#a4a4a4"/></svg><svg class="a" style="left:76px;top:5px;" width="18" height="16" viewBox="0 0 18 16"><path fill-rule="evenodd" d="M0 0 H8 L10.3 3 H18 V15.5 H0 Z M3 5.4 H15 V13 H3 Z" fill="#c29a62"/><circle cx="6.6" cy="9.3" r="2.3" fill="#6ba3cc"/></svg><div class="t" style="left:98px;top:1px;height:26px;line-height:26px;color:#000">server<span style="color:#808080"></span></div></div><div class="t" style="left:421px;top:288px;width:50px;height:26px;line-height:26px;text-align:right;color:#000">1</div><div class="t" style="left:476px;top:288px;width:50px;height:26px;line-height:26px;text-align:right;color:#000">0</div><div class="t" style="left:523px;top:288px;width:50px;height:26px;line-height:26px;text-align:right;color:#000"></div><div class="t" style="left:578px;top:288px;width:50px;height:26px;line-height:26px;text-align:right;color:#000">0</div><div class="t" style="left:643px;top:288px;width:50px;height:26px;line-height:26px;text-align:right;color:#000">8</div><div class="a" style="left:26px;top:313px;width:391px;height:26px;overflow:hidden"><svg class="a" style="left:28px;top:8px;" width="12" height="10" viewBox="0 0 12 10"><path d="M0.5 0 L11.5 0 L6 10 Z" fill="#a4a4a4"/></svg><svg class="a" style="left:52px;top:5px;" width="18" height="16" viewBox="0 0 18 16"><path fill-rule="evenodd" d="M0 0 H8 L10.3 3 H18 V15.5 H0 Z M3 5.4 H15 V13 H3 Z" fill="#c29a62"/><circle cx="6.6" cy="9.3" r="2.3" fill="#6ba3cc"/></svg><div class="t" style="left:74px;top:1px;height:26px;line-height:26px;color:#000">mat<span style="color:#808080"></span></div></div><div class="t" style="left:421px;top:314px;width:50px;height:26px;line-height:26px;text-align:right;color:#000">1</div><div class="t" style="left:476px;top:314px;width:50px;height:26px;line-height:26px;text-align:right;color:#000">0</div><div class="t" style="left:523px;top:314px;width:50px;height:26px;line-height:26px;text-align:right;color:#000"></div><div class="t" style="left:578px;top:314px;width:50px;height:26px;line-height:26px;text-align:right;color:#000">0</div><div class="t" style="left:643px;top:314px;width:50px;height:26px;line-height:26px;text-align:right;color:#000">1737</div><div class="a" style="left:26px;top:339px;width:391px;height:26px;overflow:hidden"><svg class="a" style="left:52px;top:8px;" width="12" height="10" viewBox="0 0 12 10"><path d="M0.5 0 L11.5 0 L6 10 Z" fill="#a4a4a4"/></svg><svg class="a" style="left:76px;top:5px;" width="18" height="16" viewBox="0 0 18 16"><path fill-rule="evenodd" d="M0 0 H8 L10.3 3 H18 V15.5 H0 Z M3 5.4 H15 V13 H3 Z" fill="#c29a62"/><circle cx="6.6" cy="9.3" r="2.3" fill="#6ba3cc"/></svg><div class="t" style="left:98px;top:1px;height:26px;line-height:26px;color:#000">demo<span style="color:#808080"></span></div></div><div class="t" style="left:421px;top:340px;width:50px;height:26px;line-height:26px;text-align:right;color:#000">1</div><div class="t" style="left:476px;top:340px;width:50px;height:26px;line-height:26px;text-align:right;color:#000">0</div><div class="t" style="left:523px;top:340px;width:50px;height:26px;line-height:26px;text-align:right;color:#000"></div><div class="t" style="left:578px;top:340px;width:50px;height:26px;line-height:26px;text-align:right;color:#000">0</div><div class="t" style="left:643px;top:340px;width:50px;height:26px;line-height:26px;text-align:right;color:#000">1737</div><div class="a" style="left:26px;top:365px;width:669px;height:26px;background:#3875d7"></div><div class="a" style="left:26px;top:365px;width:391px;height:26px;overflow:hidden"><svg class="a" style="left:100px;top:4px;" width="18" height="18" viewBox="0 0 18 18"><circle cx="9" cy="9" r="8.2" fill="#a9d7f6" stroke="#78bbea" stroke-width="1.4"/><path d="M11.6 6.3 A3.3 3.6 0 1 0 11.6 11.7" fill="none" stroke="#505050" stroke-width="1.3"/></svg><div class="t" style="left:122px;top:1px;height:26px;line-height:26px;color:#fff">MainActivity<span style="color:#fff"> (com.mat.demo)</span></div></div><div class="t" style="left:421px;top:366px;width:50px;height:26px;line-height:26px;text-align:right;color:#fff">1</div><div class="t" style="left:476px;top:366px;width:50px;height:26px;line-height:26px;text-align:right;color:#fff">1</div><div class="t" style="left:523px;top:366px;width:50px;height:26px;line-height:26px;text-align:right;color:#fff">245</div><div class="t" style="left:578px;top:366px;width:50px;height:26px;line-height:26px;text-align:right;color:#fff">245</div><div class="t" style="left:643px;top:366px;width:50px;height:26px;line-height:26px;text-align:right;color:#fff">1737</div><div class="a" style="left:26px;top:391px;width:391px;height:26px;overflow:hidden"><svg class="a" style="left:28px;top:4px;" width="18" height="18" viewBox="0 0 18 18"><circle cx="9" cy="9" r="8.2" fill="#a9d7f6" stroke="#78bbea" stroke-width="1.4"/><path d="M11.6 6.3 A3.3 3.6 0 1 0 11.6 11.7" fill="none" stroke="#505050" stroke-width="1.3"/></svg><div class="t" style="left:50px;top:1px;height:26px;line-height:26px;color:#000">float[]<span style="color:#808080"></span></div></div><div class="t" style="left:421px;top:392px;width:50px;height:26px;line-height:26px;text-align:right;color:#000">689</div><div class="t" style="left:476px;top:392px;width:50px;height:26px;line-height:26px;text-align:right;color:#000">23</div><div class="t" style="left:523px;top:392px;width:50px;height:26px;line-height:26px;text-align:right;color:#000">0</div><div class="t" style="left:578px;top:392px;width:50px;height:26px;line-height:26px;text-align:right;color:#000">3136</div><div class="t" style="left:643px;top:392px;width:50px;height:26px;line-height:26px;text-align:right;color:#000">3136</div><div class="a" style="left:26px;top:417px;width:391px;height:26px;overflow:hidden"><svg class="a" style="left:28px;top:4px;" width="18" height="18" viewBox="0 0 18 18"><circle cx="9" cy="9" r="8.2" fill="#a9d7f6" stroke="#78bbea" stroke-width="1.4"/><path d="M11.6 6.3 A3.3 3.6 0 1 0 11.6 11.7" fill="none" stroke="#505050" stroke-width="1.3"/></svg><div class="t" style="left:50px;top:1px;height:26px;line-height:26px;color:#000">long[]<span style="color:#808080"></span></div></div><div class="t" style="left:421px;top:418px;width:50px;height:26px;line-height:26px;text-align:right;color:#000">88</div><div class="t" style="left:476px;top:418px;width:50px;height:26px;line-height:26px;text-align:right;color:#000">55</div><div class="t" style="left:523px;top:418px;width:50px;height:26px;line-height:26px;text-align:right;color:#000">0</div><div class="t" style="left:578px;top:418px;width:50px;height:26px;line-height:26px;text-align:right;color:#000">2512</div><div class="t" style="left:643px;top:418px;width:50px;height:26px;line-height:26px;text-align:right;color:#000">2512</div><div class="a" style="left:26px;top:443px;width:391px;height:26px;overflow:hidden"><svg class="a" style="left:5px;top:7px;" width="10" height="12" viewBox="0 0 10 12"><path d="M0 0.5 L10 6 L0 11.5 Z" fill="#a4a4a4"/></svg><svg class="a" style="left:28px;top:5px;" width="18" height="16" viewBox="0 0 18 16"><path fill-rule="evenodd" d="M0 0 H8 L10.3 3 H18 V15.5 H0 Z M3 5.4 H15 V13 H3 Z" fill="#c29a62"/><circle cx="6.6" cy="9.3" r="2.3" fill="#6ba3cc"/></svg><div class="t" style="left:50px;top:1px;height:26px;line-height:26px;color:#000">dalvik<span style="color:#808080"></span></div></div><div class="t" style="left:421px;top:444px;width:50px;height:26px;line-height:26px;text-align:right;color:#000">15</div><div class="t" style="left:476px;top:444px;width:50px;height:26px;line-height:26px;text-align:right;color:#000">0</div><div class="t" style="left:523px;top:444px;width:50px;height:26px;line-height:26px;text-align:right;color:#000"></div><div class="t" style="left:578px;top:444px;width:50px;height:26px;line-height:26px;text-align:right;color:#000">0</div><div class="t" style="left:643px;top:444px;width:50px;height:26px;line-height:26px;text-align:right;color:#000">1572</div><div class="a" style="left:26px;top:469px;width:391px;height:26px;overflow:hidden"><svg class="a" style="left:5px;top:7px;" width="10" height="12" viewBox="0 0 10 12"><path d="M0 0.5 L10 6 L0 11.5 Z" fill="#a4a4a4"/></svg><svg class="a" style="left:28px;top:5px;" width="18" height="16" viewBox="0 0 18 16"><path fill-rule="evenodd" d="M0 0 H8 L10.3 3 H18 V15.5 H0 Z M3 5.4 H15 V13 H3 Z" fill="#c29a62"/><circle cx="6.6" cy="9.3" r="2.3" fill="#6ba3cc"/></svg><div class="t" style="left:50px;top:1px;height:26px;line-height:26px;color:#000">libcore<span style="color:#808080"></span></div></div><div class="t" style="left:421px;top:470px;width:50px;height:26px;line-height:26px;text-align:right;color:#000">2</div><div class="t" style="left:476px;top:470px;width:50px;height:26px;line-height:26px;text-align:right;color:#000">0</div><div class="t" style="left:523px;top:470px;width:50px;height:26px;line-height:26px;text-align:right;color:#000"></div><div class="t" style="left:578px;top:470px;width:50px;height:26px;line-height:26px;text-align:right;color:#000">0</div><div class="t" style="left:643px;top:470px;width:50px;height:26px;line-height:26px;text-align:right;color:#000">136</div><div class="a" style="left:26px;top:495px;width:391px;height:26px;overflow:hidden"><svg class="a" style="left:5px;top:7px;" width="10" height="12" viewBox="0 0 10 12"><path d="M0 0.5 L10 6 L0 11.5 Z" fill="#a4a4a4"/></svg><svg class="a" style="left:28px;top:5px;" width="18" height="16" viewBox="0 0 18 16"><path fill-rule="evenodd" d="M0 0 H8 L10.3 3 H18 V15.5 H0 Z M3 5.4 H15 V13 H3 Z" fill="#c29a62"/><circle cx="6.6" cy="9.3" r="2.3" fill="#6ba3cc"/></svg><div class="t" style="left:50px;top:1px;height:26px;line-height:26px;color:#000">org<span style="color:#808080"></span></div></div><div class="t" style="left:421px;top:496px;width:50px;height:26px;line-height:26px;text-align:right;color:#000">2</div><div class="t" style="left:476px;top:496px;width:50px;height:26px;line-height:26px;text-align:right;color:#000">0</div><div class="t" style="left:523px;top:496px;width:50px;height:26px;line-height:26px;text-align:right;color:#000"></div><div class="t" style="left:578px;top:496px;width:50px;height:26px;line-height:26px;text-align:right;color:#000">0</div><div class="t" style="left:643px;top:496px;width:50px;height:26px;line-height:26px;text-align:right;color:#000">48</div><div class="a" style="left:26px;top:521px;width:391px;height:26px;overflow:hidden"><svg class="a" style="left:28px;top:4px;" width="18" height="18" viewBox="0 0 18 18"><circle cx="9" cy="9" r="8.2" fill="#a9d7f6" stroke="#78bbea" stroke-width="1.4"/><path d="M11.6 6.3 A3.3 3.6 0 1 0 11.6 11.7" fill="none" stroke="#505050" stroke-width="1.3"/></svg><div class="t" style="left:50px;top:1px;height:26px;line-height:26px;color:#000">int[][]<span style="color:#808080"></span></div></div><div class="t" style="left:421px;top:522px;width:50px;height:26px;line-height:26px;text-align:right;color:#000">116</div><div class="t" style="left:476px;top:522px;width:50px;height:26px;line-height:26px;text-align:right;color:#000">2</div><div class="t" style="left:523px;top:522px;width:50px;height:26px;line-height:26px;text-align:right;color:#000">0</div><div class="t" style="left:578px;top:522px;width:50px;height:26px;line-height:26px;text-align:right;color:#000">12</div><div class="t" style="left:643px;top:522px;width:50px;height:26px;line-height:26px;text-align:right;color:#000">16</div><div class="a" style="left:26px;top:547px;width:391px;height:26px;overflow:hidden"><svg class="a" style="left:28px;top:4px;" width="18" height="18" viewBox="0 0 18 18"><circle cx="9" cy="9" r="8.2" fill="#a9d7f6" stroke="#78bbea" stroke-width="1.4"/><path d="M11.6 6.3 A3.3 3.6 0 1 0 11.6 11.7" fill="none" stroke="#505050" stroke-width="1.3"/></svg><div class="t" style="left:50px;top:1px;height:26px;line-height:26px;color:#000">boolean[]<span style="color:#808080"></span></div></div><div class="t" style="left:421px;top:548px;width:50px;height:26px;line-height:26px;text-align:right;color:#000">20</div><div class="t" style="left:476px;top:548px;width:50px;height:26px;line-height:26px;text-align:right;color:#000">1</div><div class="t" style="left:523px;top:548px;width:50px;height:26px;line-height:26px;text-align:right;color:#000">0</div><div class="t" style="left:578px;top:548px;width:50px;height:26px;line-height:26px;text-align:right;color:#000">16</div><div class="t" style="left:643px;top:548px;width:50px;height:26px;line-height:26px;text-align:right;color:#000">16</div><div class="a" style="left:26px;top:556px;width:685px;height:0px;"></div><div class="a" style="left:717px;top:161px;width:684px;height:395px;background:#e9e9e9"></div><div class="a" style="left:717px;top:161px;width:684px;height:22px;background:linear-gradient(#fdfdfd,#ededed 40%,#d9d9d9)"></div><div class="a" style="left:717px;top:182px;width:684px;height:1px;background:#c4c4c4"></div><div class="t" style="left:717px;top:160px;height:26px;line-height:26px;">Instance</div><div class="a" style="left:1088px;top:164px;width:1px;height:17px;background:#bdbdbd"></div><div class="a" style="left:1178px;top:164px;width:1px;height:17px;background:#bdbdbd"></div><div class="a" style="left:1265px;top:164px;width:1px;height:17px;background:#bdbdbd"></div><div class="t" style="left:1099px;top:160px;width:80px;height:26px;line-height:26px;text-align:right;">Depth</div><div class="t" style="left:1181px;top:160px;height:26px;line-height:26px;width:84px;letter-spacing:-0.53px">Shallow S...</div><div class="t" style="left:1277px;top:160px;height:26px;line-height:26px;">Dominating Size</div><div class="a" style="left:717px;top:183px;width:684px;height:26px;background:#d5d5d5"></div><svg class="a" style="left:722px;top:190px;" width="10" height="12" viewBox="0 0 10 12"><path d="M0 0.5 L10 6 L0 11.5 Z" fill="#a4a4a4"/></svg><svg class="a" style="left:745px;top:188px;" width="16" height="16" viewBox="0 0 16 16"><rect x="0.5" y="0.5" width="15" height="4.3" fill="#c29a62"/><rect x="0.5" y="6.4" width="15" height="3.3" fill="#c29a62"/><rect x="0.5" y="11.3" width="15" height="3.8" fill="#c29a62"/></svg><div class="a" style="left:717px;top:183px;width:372px;height:26px;overflow:hidden"><div class="t" style="left:49px;top:1px;height:26px;line-height:26px"><span style="color:#7a0c0c">0</span> = {MainActivity@852136192 (0x32ca9100)}</div></div><div class="t" style="left:1127px;top:184px;width:50px;height:26px;line-height:26px;text-align:right;">3</div><div class="t" style="left:1204px;top:184px;width:60px;height:26px;line-height:26px;text-align:right;">245</div><div class="t" style="left:1338px;top:184px;width:60px;height:26px;line-height:26px;text-align:right;">1737</div><div class="a" style="left:26px;top:555px;width:1375px;height:1px;background:#b8b8b8"></div><div class="a" style="left:26px;top:556px;width:1375px;height:4px;background:#e9e9e9"></div><div class="a" style="left:706px;top:558px;width:1px;height:2px;background:#b0b0b0"></div><div class="a" style="left:709px;top:558px;width:1px;height:2px;background:#b0b0b0"></div><div class="a" style="left:712px;top:558px;width:1px;height:2px;background:#b0b0b0"></div><div class="a" style="left:715px;top:558px;width:1px;height:2px;background:#b0b0b0"></div><div class="a" style="left:718px;top:558px;width:1px;height:2px;background:#b0b0b0"></div><div class="a" style="left:721px;top:558px;width:1px;height:2px;background:#b0b0b0"></div><div class="a" style="left:26px;top:560px;width:1375px;height:1px;background:#c4c4c4"></div><div class="a" style="left:26px;top:561px;width:1359px;height:21px;background:linear-gradient(#fdfdfd,#ededed 40%,#d9d9d9)"></div><div class="a" style="left:1385px;top:561px;width:16px;height:21px;background:linear-gradient(#fbfbfb,#e6e6e6)"></div><div class="a" style="left:26px;top:582px;width:1359px;height:1px;background:#c4c4c4"></div><div class="a" style="left:26px;top:583px;width:1359px;height:337px;background:#fff"></div><div class="a" style="left:1385px;top:583px;width:16px;height:337px;background:#f4f4f4"></div><div class="a" style="left:1387px;top:584px;width:13px;height:141px;background:linear-gradient(90deg,#f5f5f5,#d8d8d8);border:1px solid #c9c9c9;border-radius:3px;box-sizing:border-box"></div><div class="a" style="left:1401px;top:161px;width:1px;height:759px;background:#b0b0b0"></div><div class="t" style="left:27px;top:560px;height:24px;line-height:24px;letter-spacing:-0.25px">Reference Tree</div><div class="a" style="left:1189px;top:563px;width:1px;height:17px;background:#bdbdbd"></div><div class="a" style="left:1228px;top:563px;width:1px;height:17px;background:#bdbdbd"></div><div class="a" style="left:1306px;top:563px;width:1px;height:17px;background:#bdbdbd"></div><div class="t" style="left:1196px;top:560px;height:24px;line-height:24px;width:32px;font-size:15px;letter-spacing:-0.9px">De...</div><div class="t" style="left:1231px;top:560px;height:24px;line-height:24px;width:75px;letter-spacing:-0.64px">Shallow ...</div><div class="t" style="left:1307px;top:560px;height:24px;line-height:24px;">Dominat...</div><div class="a" style="left:26px;top:583px;width:1359px;height:337px;overflow:hidden"><svg class="a" style="left:5px;top:8px;" width="12" height="10" viewBox="0 0 12 10"><path d="M0.5 0 L11.5 0 L6 10 Z" fill="#a4a4a4"/></svg><svg class="a" style="left:29px;top:5px;" width="16" height="16" viewBox="0 0 16 16"><rect x="0.5" y="0.5" width="15" height="4.3" fill="#c29a62"/><rect x="0.5" y="6.4" width="15" height="3.3" fill="#c29a62"/><rect x="0.5" y="11.3" width="15" height="3.8" fill="#c29a62"/></svg><div class="t" style="left:50px;top:1px;height:26px;line-height:26px">com.mat.demo.MainActivity@852136192 (0x32ca9100)</div><svg class="a" style="left:29px;top:33px;" width="10" height="12" viewBox="0 0 10 12"><path d="M0 0.5 L10 6 L0 11.5 Z" fill="#a4a4a4"/></svg><svg class="a" style="left:53px;top:31px;" width="16" height="16" viewBox="0 0 16 16"><rect x="0.5" y="0.5" width="15" height="4.3" fill="#c29a62"/><rect x="0.5" y="6.4" width="15" height="3.3" fill="#c29a62"/><rect x="0.5" y="11.3" width="15" height="3.8" fill="#c29a62"/></svg><div class="t" style="left:74px;top:27px;height:26px;line-height:26px;width:1089px"><span style="color:#7a0c0c">mContext</span> <i style="color:#a8a8a8;margin:0 1px 0 2px">in</i> com.android.internal.policy.PhoneWindow$DecorView@851667968 (0x32c36c00)</div><svg class="a" style="left:29px;top:59px;" width="10" height="12" viewBox="0 0 10 12"><path d="M0 0.5 L10 6 L0 11.5 Z" fill="#a4a4a4"/></svg><svg class="a" style="left:53px;top:57px;" width="16" height="16" viewBox="0 0 16 16"><rect x="0.5" y="0.5" width="15" height="4.3" fill="#c29a62"/><rect x="0.5" y="6.4" width="15" height="3.3" fill="#c29a62"/><rect x="0.5" y="11.3" width="15" height="3.8" fill="#c29a62"/></svg><div class="t" style="left:74px;top:53px;height:26px;line-height:26px;width:1089px"><span style="color:#7a0c0c">mContext</span> <i style="color:#a8a8a8;margin:0 1px 0 2px">in</i> android.view.ViewRootImpl@851754880 (0x32c4bf80)</div><svg class="a" style="left:29px;top:85px;" width="10" height="12" viewBox="0 0 10 12"><path d="M0 0.5 L10 6 L0 11.5 Z" fill="#a4a4a4"/></svg><svg class="a" style="left:53px;top:83px;" width="16" height="16" viewBox="0 0 16 16"><rect x="0.5" y="0.5" width="15" height="4.3" fill="#c29a62"/><rect x="0.5" y="6.4" width="15" height="3.3" fill="#c29a62"/><rect x="0.5" y="11.3" width="15" height="3.8" fill="#c29a62"/></svg><div class="t" style="left:74px;top:79px;height:26px;line-height:26px;width:1089px"><span style="color:#7a0c0c">activity</span> <i style="color:#a8a8a8;margin:0 1px 0 2px">in</i> android.app.ActivityThread$ActivityClientRecord@851520384 (0x32c12b80)</div><svg class="a" style="left:29px;top:111px;" width="10" height="12" viewBox="0 0 10 12"><path d="M0 0.5 L10 6 L0 11.5 Z" fill="#a4a4a4"/></svg><svg class="a" style="left:53px;top:109px;" width="16" height="16" viewBox="0 0 16 16"><rect x="0.5" y="0.5" width="15" height="4.3" fill="#c29a62"/><rect x="0.5" y="6.4" width="15" height="3.3" fill="#c29a62"/><rect x="0.5" y="11.3" width="15" height="3.8" fill="#c29a62"/></svg><div class="t" style="left:74px;top:105px;height:26px;line-height:26px;width:1089px"><span style="color:#7a0c0c">mContext, mOnWindowDismissedCallback</span> <i style="color:#a8a8a8;margin:0 1px 0 2px">in</i> com.android.internal.policy.PhoneWindow@852087168 (0x32c9d180)</div><svg class="a" style="left:29px;top:137px;" width="10" height="12" viewBox="0 0 10 12"><path d="M0 0.5 L10 6 L0 11.5 Z" fill="#a4a4a4"/></svg><svg class="a" style="left:53px;top:135px;" width="16" height="16" viewBox="0 0 16 16"><rect x="0.5" y="0.5" width="15" height="4.3" fill="#c29a62"/><rect x="0.5" y="6.4" width="15" height="3.3" fill="#c29a62"/><rect x="0.5" y="11.3" width="15" height="3.8" fill="#c29a62"/></svg><div class="t" style="left:74px;top:131px;height:26px;line-height:26px;width:1089px"><span style="color:#7a0c0c">mContext, mOnWindowDismissedCallback</span> <i style="color:#a8a8a8;margin:0 1px 0 2px">in</i> com.android.internal.policy.PhoneWindow@852087168 (0x32c9d180)</div><svg class="a" style="left:29px;top:163px;" width="10" height="12" viewBox="0 0 10 12"><path d="M0 0.5 L10 6 L0 11.5 Z" fill="#a4a4a4"/></svg><svg class="a" style="left:53px;top:161px;" width="16" height="16" viewBox="0 0 16 16"><rect x="0.5" y="0.5" width="15" height="4.3" fill="#c29a62"/><rect x="0.5" y="6.4" width="15" height="3.3" fill="#c29a62"/><rect x="0.5" y="11.3" width="15" height="3.8" fill="#c29a62"/></svg><div class="t" style="left:74px;top:157px;height:26px;line-height:26px;width:1089px"><span style="color:#7a0c0c">mContext</span> <i style="color:#a8a8a8;margin:0 1px 0 2px">in</i> android.support.v7.widget.TintResources@852079616 (0x32c9b400)</div><svg class="a" style="left:29px;top:189px;" width="10" height="12" viewBox="0 0 10 12"><path d="M0 0.5 L10 6 L0 11.5 Z" fill="#a4a4a4"/></svg><svg class="a" style="left:53px;top:187px;" width="16" height="16" viewBox="0 0 16 16"><rect x="0.5" y="0.5" width="15" height="4.3" fill="#c29a62"/><rect x="0.5" y="6.4" width="15" height="3.3" fill="#c29a62"/><rect x="0.5" y="11.3" width="15" height="3.8" fill="#c29a62"/></svg><div class="t" style="left:74px;top:183px;height:26px;line-height:26px;width:1089px"><span style="color:#7a0c0c">mOuterContext</span> <i style="color:#a8a8a8;margin:0 1px 0 2px">in</i> android.app.ContextImpl@851518720 (0x32c12500)</div><svg class="a" style="left:29px;top:215px;" width="10" height="12" viewBox="0 0 10 12"><path d="M0 0.5 L10 6 L0 11.5 Z" fill="#a4a4a4"/></svg><svg class="a" style="left:53px;top:213px;" width="16" height="16" viewBox="0 0 16 16"><rect x="0.5" y="0.5" width="15" height="4.3" fill="#c29a62"/><rect x="0.5" y="6.4" width="15" height="3.3" fill="#c29a62"/><rect x="0.5" y="11.3" width="15" height="3.8" fill="#c29a62"/></svg><div class="t" style="left:74px;top:209px;height:26px;line-height:26px;width:1089px"><span style="color:#7a0c0c">mContext</span> <i style="color:#a8a8a8;margin:0 1px 0 2px">in</i> android.widget.FrameLayout@851670016 (0x32c37400)</div><svg class="a" style="left:29px;top:241px;" width="10" height="12" viewBox="0 0 10 12"><path d="M0 0.5 L10 6 L0 11.5 Z" fill="#a4a4a4"/></svg><svg class="a" style="left:53px;top:239px;" width="16" height="16" viewBox="0 0 16 16"><rect x="0.5" y="0.5" width="15" height="4.3" fill="#c29a62"/><rect x="0.5" y="6.4" width="15" height="3.3" fill="#c29a62"/><rect x="0.5" y="11.3" width="15" height="3.8" fill="#c29a62"/></svg><div class="t" style="left:74px;top:235px;height:26px;line-height:26px;width:1089px"><span style="color:#7a0c0c">mContext</span> <i style="color:#a8a8a8;margin:0 1px 0 2px">in</i> android.widget.LinearLayout@851671040 (0x32c37800)</div><svg class="a" style="left:29px;top:267px;" width="10" height="12" viewBox="0 0 10 12"><path d="M0 0.5 L10 6 L0 11.5 Z" fill="#a4a4a4"/></svg><svg class="a" style="left:53px;top:265px;" width="16" height="16" viewBox="0 0 16 16"><rect x="0.5" y="0.5" width="15" height="4.3" fill="#c29a62"/><rect x="0.5" y="6.4" width="15" height="3.3" fill="#c29a62"/><rect x="0.5" y="11.3" width="15" height="3.8" fill="#c29a62"/></svg><div class="t" style="left:74px;top:261px;height:26px;line-height:26px;width:1089px"><span style="color:#7a0c0c">mAppCompatCallback, mContext, mOriginalWindowCallback</span> <i style="color:#a8a8a8;margin:0 1px 0 2px">in</i> android.support.v7.app.AppCompatDelegateImplV23@851493280 (0x32c0c1a0)</div><svg class="a" style="left:29px;top:293px;" width="10" height="12" viewBox="0 0 10 12"><path d="M0 0.5 L10 6 L0 11.5 Z" fill="#a4a4a4"/></svg><svg class="a" style="left:53px;top:291px;" width="16" height="16" viewBox="0 0 16 16"><rect x="0.5" y="0.5" width="15" height="4.3" fill="#c29a62"/><rect x="0.5" y="6.4" width="15" height="3.3" fill="#c29a62"/><rect x="0.5" y="11.3" width="15" height="3.8" fill="#c29a62"/></svg><div class="t" style="left:74px;top:287px;height:26px;line-height:26px;width:1089px"><span style="color:#7a0c0c">mAppCompatCallback, mContext, mOriginalWindowCallback</span> <i style="color:#a8a8a8;margin:0 1px 0 2px">in</i> android.support.v7.app.AppCompatDelegateImplV23@851493280 (0x32c0c1a0)</div><svg class="a" style="left:29px;top:319px;" width="10" height="12" viewBox="0 0 10 12"><path d="M0 0.5 L10 6 L0 11.5 Z" fill="#a4a4a4"/></svg><svg class="a" style="left:53px;top:317px;" width="16" height="16" viewBox="0 0 16 16"><rect x="0.5" y="0.5" width="15" height="4.3" fill="#c29a62"/><rect x="0.5" y="6.4" width="15" height="3.3" fill="#c29a62"/><rect x="0.5" y="11.3" width="15" height="3.8" fill="#c29a62"/></svg><div class="t" style="left:74px;top:313px;height:26px;line-height:26px;width:1089px"><span style="color:#7a0c0c">mAppCompatCallback, mContext, mOriginalWindowCallback</span> <i style="color:#a8a8a8;margin:0 1px 0 2px">in</i> android.support.v7.app.AppCompatDelegateImplV23@851493280 (0x32c0c1a0)</div></div><div class="t" style="left:1187px;top:584px;width:40px;height:26px;line-height:26px;text-align:right;">3</div><div class="t" style="left:1245px;top:584px;width:60px;height:26px;line-height:26px;text-align:right;">245</div><div class="t" style="left:1312px;top:584px;width:70px;height:26px;line-height:26px;text-align:right;">1737</div><div class="t" style="left:1187px;top:610px;width:40px;height:26px;line-height:26px;text-align:right;">2</div><div class="t" style="left:1245px;top:610px;width:60px;height:26px;line-height:26px;text-align:right;">701</div><div class="t" style="left:1312px;top:610px;width:70px;height:26px;line-height:26px;text-align:right;">2794</div><div class="t" style="left:1187px;top:636px;width:40px;height:26px;line-height:26px;text-align:right;">3</div><div class="t" style="left:1245px;top:636px;width:60px;height:26px;line-height:26px;text-align:right;">473</div><div class="t" style="left:1312px;top:636px;width:70px;height:26px;line-height:26px;text-align:right;">3151</div><div class="t" style="left:1187px;top:662px;width:40px;height:26px;line-height:26px;text-align:right;">3</div><div class="t" style="left:1245px;top:662px;width:60px;height:26px;line-height:26px;text-align:right;">118</div><div class="t" style="left:1312px;top:662px;width:70px;height:26px;line-height:26px;text-align:right;">235</div><div class="t" style="left:1187px;top:688px;width:40px;height:26px;line-height:26px;text-align:right;">3</div><div class="t" style="left:1245px;top:688px;width:60px;height:26px;line-height:26px;text-align:right;">337</div><div class="t" style="left:1312px;top:688px;width:70px;height:26px;line-height:26px;text-align:right;">20096</div><div class="t" style="left:1187px;top:714px;width:40px;height:26px;line-height:26px;text-align:right;">3</div><div class="t" style="left:1245px;top:714px;width:60px;height:26px;line-height:26px;text-align:right;">337</div><div class="t" style="left:1312px;top:714px;width:70px;height:26px;line-height:26px;text-align:right;">20096</div><div class="t" style="left:1187px;top:740px;width:40px;height:26px;line-height:26px;text-align:right;">3</div><div class="t" style="left:1245px;top:740px;width:60px;height:26px;line-height:26px;text-align:right;">84</div><div class="t" style="left:1312px;top:740px;width:70px;height:26px;line-height:26px;text-align:right;">4623</div><div class="t" style="left:1187px;top:766px;width:40px;height:26px;line-height:26px;text-align:right;">4</div><div class="t" style="left:1245px;top:766px;width:60px;height:26px;line-height:26px;text-align:right;">121</div><div class="t" style="left:1312px;top:766px;width:70px;height:26px;line-height:26px;text-align:right;">727</div><div class="t" style="left:1187px;top:792px;width:40px;height:26px;line-height:26px;text-align:right;">4</div><div class="t" style="left:1245px;top:792px;width:60px;height:26px;line-height:26px;text-align:right;">572</div><div class="t" style="left:1312px;top:792px;width:70px;height:26px;line-height:26px;text-align:right;">954</div><div class="t" style="left:1187px;top:818px;width:40px;height:26px;line-height:26px;text-align:right;">4</div><div class="t" style="left:1245px;top:818px;width:60px;height:26px;line-height:26px;text-align:right;">600</div><div class="t" style="left:1312px;top:818px;width:70px;height:26px;line-height:26px;text-align:right;">1485</div><div class="t" style="left:1187px;top:844px;width:40px;height:26px;line-height:26px;text-align:right;">4</div><div class="t" style="left:1245px;top:844px;width:60px;height:26px;line-height:26px;text-align:right;">132</div><div class="t" style="left:1312px;top:844px;width:70px;height:26px;line-height:26px;text-align:right;">742</div><div class="t" style="left:1187px;top:870px;width:40px;height:26px;line-height:26px;text-align:right;">4</div><div class="t" style="left:1245px;top:870px;width:60px;height:26px;line-height:26px;text-align:right;">132</div><div class="t" style="left:1312px;top:870px;width:70px;height:26px;line-height:26px;text-align:right;">742</div><div class="t" style="left:1187px;top:896px;width:40px;height:25px;line-height:25px;text-align:right;">4</div><div class="t" style="left:1245px;top:896px;width:60px;height:25px;line-height:25px;text-align:right;">132</div><div class="t" style="left:1312px;top:896px;width:70px;height:25px;line-height:25px;text-align:right;">742</div><div class="a" style="left:1402px;top:133px;width:25px;height:787px;background:#e9e9e9"></div><div class="a" style="left:1402px;top:133px;width:25px;height:145px;background:linear-gradient(#edf1f6,#c4d5ea)"></div><div class="a" style="left:1427px;top:100px;width:1px;height:820px;background:#a8a8a8"></div><svg class="a" style="left:1406px;top:147px;" width="16" height="17" viewBox="0 0 16 17"><rect x="1" y="3" width="10" height="13" fill="#f4f4f4" stroke="#888" stroke-width="1"/><rect x="3" y="10" width="5" height="5" fill="#a37cc8"/><circle cx="9" cy="6" r="4" fill="none" stroke="#777" stroke-width="1.6"/><path d="M12 9 L15 12" stroke="#777" stroke-width="2"/></svg><div class="t" style="left:1405px;top:167px;width:20px;height:110px;writing-mode:vertical-rl;line-height:20px;font-size:15px;letter-spacing:-0.45px">Analyzer Tasks</div><div class="t" style="left:5px;top:705px;width:18px;height:77px;writing-mode:vertical-rl;transform:rotate(180deg);line-height:18px;font-size:14.5px"><u>2</u>: Favorites</div><svg class="a" style="left:5px;top:787px;" width="16" height="15" viewBox="0 0 16 15"><path d="M8 0 L10.3 5.2 L16 5.6 L11.7 9.3 L13 15 L8 12 L3 15 L4.3 9.3 L0 5.6 L5.7 5.2 Z" fill="#e9a23b"/></svg><div class="t" style="left:5px;top:828px;width:18px;height:100px;writing-mode:vertical-rl;transform:rotate(180deg);line-height:18px;font-size:15.5px;text-align:right">Build Variants</div><div class="a" style="left:1428px;top:100px;width:466px;height:28px;background:linear-gradient(#ececec,#dcdcdc)"></div><div class="a" style="left:1428px;top:128px;width:466px;height:1px;background:#a8a8a8"></div><div class="a" style="left:1428px;top:100px;width:134px;height:28px;background:linear-gradient(#e2e2e2,#cfcfcf)"></div><div class="a" style="left:1562px;top:100px;width:1px;height:28px;background:#b8b8b8"></div><svg class="a" style="left:1438px;top:106px;" width="19" height="17" viewBox="0 0 19 17"><rect x="5" y="0.5" width="13" height="10" fill="#bfe0f7" stroke="#5a9fd4" stroke-width="1.2"/><rect x="0.5" y="4" width="9" height="12" fill="#888"/><rect x="2.5" y="7" width="5" height="1.3" fill="#ddd"/><rect x="2.5" y="10" width="5" height="1.3" fill="#ddd"/></svg><div class="t" style="left:1461px;top:102px;height:26px;line-height:26px;color:#505050;letter-spacing:-0.9px">Project</div><svg class="a" style="left:1548px;top:112px;" width="9" height="6" viewBox="0 0 9 6"><path d="M0 0 H9 L4.5 6 Z" fill="#777"/></svg><svg class="a" style="left:1782px;top:106px;" width="16" height="16" viewBox="0 0 16 16"><circle cx="8" cy="8" r="6.6" fill="none" stroke="#8a8a8a" stroke-width="2"/><path d="M8 1.5 V5.2 M8 10.8 V14.5 M1.5 8 H5.2 M10.8 8 H14.5" stroke="#8a8a8a" stroke-width="2.4"/></svg><svg class="a" style="left:1807px;top:106px;" width="14" height="16" viewBox="0 0 14 16"><path d="M0 7 H14 M0 10 H14 M7 0 V5 M4.5 2.5 L7 5 L9.5 2.5 M7 16 V12 M4.5 14.5 L7 12 L9.5 14.5" fill="none" stroke="#8a8a8a" stroke-width="1.6"/></svg><div class="a" style="left:1829px;top:104px;width:1px;height:20px;background:#c8c8c8"></div><svg class="a" style="left:1838px;top:106px;" width="24" height="16" viewBox="0 0 24 16"><g transform="translate(7.5,8)" fill="#8a8a8a"><rect x="-1.4" y="-7.8" width="2.8" height="15.6"/><rect x="-1.4" y="-7.8" width="2.8" height="15.6" transform="rotate(45)"/><rect x="-1.4" y="-7.8" width="2.8" height="15.6" transform="rotate(90)"/><rect x="-1.4" y="-7.8" width="2.8" height="15.6" transform="rotate(135)"/><circle r="5.6"/><circle r="2.2" fill="#e2e2e2"/></g><path d="M18 7 H24 L21 10 Z" fill="#8a8a8a"/></svg><svg class="a" style="left:1871px;top:106px;" width="17" height="16" viewBox="0 0 17 16"><rect x="0.5" y="0.5" width="3.2" height="14" fill="#8a8a8a"/><rect x="1.4" y="7" width="1.4" height="6.5" fill="#f0f0f0"/><path d="M6 4.5 H17 M9.3 1.2 L6 4.5 L9.3 7.8" fill="none" stroke="#8a8a8a" stroke-width="1.3"/></svg><div class="a" style="left:1428px;top:129px;width:466px;height:791px;background:#fff"></div><div class="a" style="left:1894px;top:100px;width:1px;height:820px;background:#a8a8a8"></div><div class="a" style="left:1895px;top:100px;width:1px;height:820px;background:#e9e9e9"></div><svg class="a" style="left:1431px;top:137px;" width="12" height="10" viewBox="0 0 12 10"><path d="M0.5 0 L11.5 0 L6 10 Z" fill="#a4a4a4"/></svg><svg class="a" style="left:1455px;top:135px;" width="18" height="16" viewBox="0 0 18 16"><path fill-rule="evenodd" d="M0 0 H8 L10.3 3 H18 V15.5 H0 Z M3 5.4 H15 V13 H3 Z" fill="#c29a62"/></svg><svg class="a" style="left:1463px;top:144px;" width="12" height="8" viewBox="0 0 12 8"><path d="M0.5 0.5 H9 V3 A4 4 0 0 1 0.5 3 Z" fill="#4a9ad4"/><path d="M9 1.5 H11 V3.5 H9" fill="none" stroke="#4a9ad4" stroke-width="1"/></svg><div class="t" style="left:1477px;top:130px;height:26px;line-height:26px;font-weight:bold;">MatDemo<span style="color:#8a8a8a;font-weight:normal"> (D:\MatDemo)</span></div><div class="a" style="left:1428px;top:155px;width:466px;height:26px;background:#ffffe4"></div><svg class="a" style="left:1456px;top:162px;" width="10" height="12" viewBox="0 0 10 12"><path d="M0 0.5 L10 6 L0 11.5 Z" fill="#a4a4a4"/></svg><svg class="a" style="left:1479px;top:161px;" width="18" height="16" viewBox="0 0 18 16"><path fill-rule="evenodd" d="M0 0 H8 L10.3 3 H18 V15.5 H0 Z M3 5.4 H15 V13 H3 Z" fill="#d46a6a"/></svg><div class="t" style="left:1501px;top:156px;height:26px;line-height:26px;">.gradle</div><svg class="a" style="left:1456px;top:188px;" width="10" height="12" viewBox="0 0 10 12"><path d="M0 0.5 L10 6 L0 11.5 Z" fill="#a4a4a4"/></svg><svg class="a" style="left:1479px;top:187px;" width="18" height="16" viewBox="0 0 18 16"><path fill-rule="evenodd" d="M0 0 H8 L10.3 3 H18 V15.5 H0 Z M3 5.4 H15 V13 H3 Z" fill="#c29a62"/></svg><div class="t" style="left:1501px;top:182px;height:26px;line-height:26px;">.idea</div><svg class="a" style="left:1455px;top:215px;" width="12" height="10" viewBox="0 0 12 10"><path d="M0.5 0 L11.5 0 L6 10 Z" fill="#a4a4a4"/></svg><svg class="a" style="left:1479px;top:213px;" width="18" height="16" viewBox="0 0 18 16"><path fill-rule="evenodd" d="M0 0 H8 L10.3 3 H18 V15.5 H0 Z M3 5.4 H15 V13 H3 Z" fill="#c29a62"/></svg><svg class="a" style="left:1489px;top:217px;" width="8" height="14" viewBox="0 0 8 14"><rect x="0.5" y="0.5" width="7" height="13" fill="#777"/><rect x="2" y="3" width="4" height="7" fill="#8cc152"/></svg><div class="t" style="left:1501px;top:208px;height:26px;line-height:26px;font-weight:bold;">app</div><svg class="a" style="left:1480px;top:240px;" width="10" height="12" viewBox="0 0 10 12"><path d="M0 0.5 L10 6 L0 11.5 Z" fill="#a4a4a4"/></svg><svg class="a" style="left:1503px;top:239px;" width="18" height="16" viewBox="0 0 18 16"><path fill-rule="evenodd" d="M0 0 H8 L10.3 3 H18 V15.5 H0 Z M3 5.4 H15 V13 H3 Z" fill="#c29a62"/></svg><div class="t" style="left:1525px;top:234px;height:26px;line-height:26px;">build</div><svg class="a" style="left:1503px;top:265px;" width="18" height="16" viewBox="0 0 18 16"><path fill-rule="evenodd" d="M0 0 H8 L10.3 3 H18 V15.5 H0 Z M3 5.4 H15 V13 H3 Z" fill="#c29a62"/></svg><div class="t" style="left:1525px;top:260px;height:26px;line-height:26px;">libs</div><svg class="a" style="left:1479px;top:293px;" width="12" height="10" viewBox="0 0 12 10"><path d="M0.5 0 L11.5 0 L6 10 Z" fill="#a4a4a4"/></svg><svg class="a" style="left:1503px;top:291px;" width="18" height="16" viewBox="0 0 18 16"><path fill-rule="evenodd" d="M0 0 H8 L10.3 3 H18 V15.5 H0 Z M3 5.4 H15 V13 H3 Z" fill="#c29a62"/></svg><div class="t" style="left:1525px;top:286px;height:26px;line-height:26px;">src</div><svg class="a" style="left:1504px;top:318px;" width="10" height="12" viewBox="0 0 10 12"><path d="M0 0.5 L10 6 L0 11.5 Z" fill="#a4a4a4"/></svg><svg class="a" style="left:1527px;top:317px;" width="18" height="16" viewBox="0 0 18 16"><path fill-rule="evenodd" d="M0 0 H8 L10.3 3 H18 V15.5 H0 Z M3 5.4 H15 V13 H3 Z" fill="#c29a62"/></svg><div class="t" style="left:1549px;top:312px;height:26px;line-height:26px;">androidTest</div><svg class="a" style="left:1503px;top:345px;" width="12" height="10" viewBox="0 0 12 10"><path d="M0.5 0 L11.5 0 L6 10 Z" fill="#a4a4a4"/></svg><svg class="a" style="left:1527px;top:343px;" width="18" height="16" viewBox="0 0 18 16"><path fill-rule="evenodd" d="M0 0 H8 L10.3 3 H18 V15.5 H0 Z M3 5.4 H15 V13 H3 Z" fill="#c29a62"/></svg><div class="t" style="left:1549px;top:338px;height:26px;line-height:26px;">main</div><svg class="a" style="left:1527px;top:371px;" width="12" height="10" viewBox="0 0 12 10"><path d="M0.5 0 L11.5 0 L6 10 Z" fill="#a4a4a4"/></svg><svg class="a" style="left:1551px;top:369px;" width="18" height="16" viewBox="0 0 18 16"><path fill-rule="evenodd" d="M0 0 H8 L10.3 3 H18 V15.5 H0 Z M3 5.4 H15 V13 H3 Z" fill="#6aa2cf"/></svg><div class="t" style="left:1573px;top:364px;height:26px;line-height:26px;">java</div><svg class="a" style="left:1551px;top:397px;" width="12" height="10" viewBox="0 0 12 10"><path d="M0.5 0 L11.5 0 L6 10 Z" fill="#a4a4a4"/></svg><svg class="a" style="left:1575px;top:395px;" width="18" height="16" viewBox="0 0 18 16"><path fill-rule="evenodd" d="M0 0 H8 L10.3 3 H18 V15.5 H0 Z M3 5.4 H15 V13 H3 Z" fill="#c29a62"/><circle cx="6.6" cy="9.3" r="2.3" fill="#6ba3cc"/></svg><div class="t" style="left:1597px;top:390px;height:26px;line-height:26px;">com.mat.demo</div><div class="a" style="left:1428px;top:415px;width:466px;height:26px;background:#d5d5d5"></div><svg class="a" style="left:1599px;top:419px;" width="18" height="18" viewBox="0 0 18 18"><circle cx="9" cy="9" r="8.2" fill="#a9d7f6" stroke="#78bbea" stroke-width="1.4"/><path d="M11.6 6.3 A3.3 3.6 0 1 0 11.6 11.7" fill="none" stroke="#505050" stroke-width="1.3"/></svg><svg class="a" style="left:1621px;top:422px;" width="11" height="13" viewBox="0 0 11 13"><path d="M2.5 6 V3.5 A3 3 0 0 1 8.5 3.5" fill="none" stroke="#5cb85c" stroke-width="1.6"/><rect x="0.5" y="6" width="10" height="7" fill="#5cb85c"/><rect x="4.5" y="8" width="2" height="3" fill="#fff"/></svg><div class="t" style="left:1641px;top:416px;height:26px;line-height:26px;">MainActivity</div><svg class="a" style="left:1528px;top:448px;" width="10" height="12" viewBox="0 0 10 12"><path d="M0 0.5 L10 6 L0 11.5 Z" fill="#a4a4a4"/></svg><svg class="a" style="left:1551px;top:447px;" width="18" height="16" viewBox="0 0 18 16"><path fill-rule="evenodd" d="M0 0 H8 L10.3 3 H18 V15.5 H0 Z M3 5.4 H15 V13 H3 Z" fill="#c29a62"/></svg><svg class="a" style="left:1561px;top:451px;" width="9" height="9" viewBox="0 0 9 9"><rect x="0" y="0" width="9" height="9" fill="#f2b51b"/><path d="M0 3 H9 M0 6 H9 M3 0 V9 M6 0 V9" stroke="#c68a00" stroke-width="0.8"/></svg><div class="t" style="left:1573px;top:442px;height:26px;line-height:26px;">res</div><svg class="a" style="left:1552px;top:470px;" width="18" height="19" viewBox="0 0 18 19"><path d="M1.5 1 H9.5 L14.5 6 V18 H1.5 Z" fill="#fff" stroke="#9a9a9a" stroke-width="1.6"/><rect x="0" y="6" width="17" height="9" fill="#f0a848"/><path d="M7 8 L4.5 10.5 L7 13 M10 8 L12.5 10.5 L10 13" fill="none" stroke="#555" stroke-width="1.1"/></svg><div class="t" style="left:1573px;top:468px;height:26px;line-height:26px;">AndroidManifest.xml</div><svg class="a" style="left:1504px;top:500px;" width="10" height="12" viewBox="0 0 10 12"><path d="M0 0.5 L10 6 L0 11.5 Z" fill="#a4a4a4"/></svg><svg class="a" style="left:1527px;top:499px;" width="18" height="16" viewBox="0 0 18 16"><path fill-rule="evenodd" d="M0 0 H8 L10.3 3 H18 V15.5 H0 Z M3 5.4 H15 V13 H3 Z" fill="#c29a62"/></svg><div class="t" style="left:1549px;top:494px;height:26px;line-height:26px;">test</div><svg class="a" style="left:1503px;top:523px;" width="16" height="18" viewBox="0 0 16 18"><path d="M1.5 1 H9.5 L14.5 6 V17 H1.5 Z" fill="#fff" stroke="#9a9a9a" stroke-width="1.6"/><path d="M9.5 1 V6 H14.5" fill="none" stroke="#9a9a9a" stroke-width="1.2"/><path d="M4.5 8.5 H11.5 M4.5 11 H11.5 M4.5 13.5 H11.5" stroke="#4a90d0" stroke-width="1.2"/></svg><div class="t" style="left:1525px;top:520px;height:26px;line-height:26px;">.gitignore</div><svg class="a" style="left:1503px;top:549px;" width="18" height="18" viewBox="0 0 18 18"><path d="M7 2.5 H11 V12 A4 4 0 0 1 3.5 14" fill="none" stroke="#3d8fd1" stroke-width="3"/><rect x="13" y="2.5" width="3" height="14" fill="#3d8fd1"/><circle cx="3" cy="8" r="2.2" fill="#e8892c"/></svg><div class="t" style="left:1525px;top:546px;height:26px;line-height:26px;">app.iml</div><svg class="a" style="left:1503px;top:575px;" width="18" height="18" viewBox="0 0 18 18"><path d="M15.5 5.5 A7.2 7.2 0 1 0 15.5 12.5" fill="none" stroke="#8cc152" stroke-width="2.6"/><circle cx="9" cy="9" r="3" fill="#2e9a48"/></svg><div class="t" style="left:1525px;top:572px;height:26px;line-height:26px;">build.gradle</div><svg class="a" style="left:1503px;top:601px;" width="16" height="18" viewBox="0 0 16 18"><path d="M1.5 1 H9.5 L14.5 6 V17 H1.5 Z" fill="#fff" stroke="#9a9a9a" stroke-width="1.6"/><path d="M9.5 1 V6 H14.5" fill="none" stroke="#9a9a9a" stroke-width="1.2"/><path d="M4.5 8.5 H11.5 M4.5 11 H11.5 M4.5 13.5 H11.5" stroke="#4a90d0" stroke-width="1.2"/></svg><div class="t" style="left:1525px;top:598px;height:26px;line-height:26px;">proguard-rules.pro</div><svg class="a" style="left:1456px;top:630px;" width="10" height="12" viewBox="0 0 10 12"><path d="M0 0.5 L10 6 L0 11.5 Z" fill="#a4a4a4"/></svg><svg class="a" style="left:1479px;top:629px;" width="18" height="16" viewBox="0 0 18 16"><path fill-rule="evenodd" d="M0 0 H8 L10.3 3 H18 V15.5 H0 Z M3 5.4 H15 V13 H3 Z" fill="#c29a62"/></svg><div class="t" style="left:1501px;top:624px;height:26px;line-height:26px;">build</div><svg class="a" style="left:1456px;top:656px;" width="10" height="12" viewBox="0 0 10 12"><path d="M0 0.5 L10 6 L0 11.5 Z" fill="#a4a4a4"/></svg><svg class="a" style="left:1479px;top:655px;" width="18" height="16" viewBox="0 0 18 16"><path fill-rule="evenodd" d="M0 0 H8 L10.3 3 H18 V15.5 H0 Z M3 5.4 H15 V13 H3 Z" fill="#c29a62"/></svg><div class="t" style="left:1501px;top:650px;height:26px;line-height:26px;">gradle</div><svg class="a" style="left:1479px;top:679px;" width="16" height="18" viewBox="0 0 16 18"><path d="M1.5 1 H9.5 L14.5 6 V17 H1.5 Z" fill="#fff" stroke="#9a9a9a" stroke-width="1.6"/><path d="M9.5 1 V6 H14.5" fill="none" stroke="#9a9a9a" stroke-width="1.2"/><path d="M4.5 8.5 H11.5 M4.5 11 H11.5 M4.5 13.5 H11.5" stroke="#4a90d0" stroke-width="1.2"/></svg><div class="t" style="left:1501px;top:676px;height:26px;line-height:26px;">.gitignore</div><svg class="a" style="left:1479px;top:705px;" width="18" height="18" viewBox="0 0 18 18"><path d="M15.5 5.5 A7.2 7.2 0 1 0 15.5 12.5" fill="none" stroke="#8cc152" stroke-width="2.6"/><circle cx="9" cy="9" r="3" fill="#2e9a48"/></svg><div class="t" style="left:1501px;top:702px;height:26px;line-height:26px;">build.gradle</div><svg class="a" style="left:1479px;top:731px;" width="16" height="18" viewBox="0 0 16 18"><path d="M1.5 1 H9.5 L14.5 6 V17 H1.5 Z" fill="#fff" stroke="#9a9a9a" stroke-width="1.6"/><rect x="5" y="11" width="2.6" height="6" fill="#e06060"/><rect x="8.2" y="8.5" width="2.6" height="8.5" fill="#f0a030"/><rect x="11.4" y="6.5" width="2.8" height="10.5" fill="#6cb33f"/></svg><div class="t" style="left:1501px;top:728px;height:26px;line-height:26px;">gradle.properties</div><svg class="a" style="left:1479px;top:757px;" width="16" height="18" viewBox="0 0 16 18"><path d="M1.5 1 H9.5 L14.5 6 V17 H1.5 Z" fill="#fff" stroke="#9a9a9a" stroke-width="1.6"/><path d="M9.5 1 V6 H14.5" fill="none" stroke="#9a9a9a" stroke-width="1.2"/><path d="M4.5 8.5 H11.5 M4.5 11 H11.5 M4.5 13.5 H11.5" stroke="#4a90d0" stroke-width="1.2"/></svg><div class="t" style="left:1501px;top:754px;height:26px;line-height:26px;">gradlew</div><svg class="a" style="left:1479px;top:783px;" width="16" height="18" viewBox="0 0 16 18"><path d="M1.5 1 H9.5 L14.5 6 V17 H1.5 Z" fill="#fff" stroke="#9a9a9a" stroke-width="1.6"/><path d="M9.5 1 V6 H14.5" fill="none" stroke="#9a9a9a" stroke-width="1.2"/><path d="M4.5 8.5 H11.5 M4.5 11 H11.5 M4.5 13.5 H11.5" stroke="#4a90d0" stroke-width="1.2"/></svg><div class="t" style="left:1501px;top:780px;height:26px;line-height:26px;">gradlew.bat</div><svg class="a" style="left:1479px;top:809px;" width="16" height="18" viewBox="0 0 16 18"><path d="M1.5 1 H9.5 L14.5 6 V17 H1.5 Z" fill="#fff" stroke="#9a9a9a" stroke-width="1.6"/><rect x="5" y="11" width="2.6" height="6" fill="#e06060"/><rect x="8.2" y="8.5" width="2.6" height="8.5" fill="#f0a030"/><rect x="11.4" y="6.5" width="2.8" height="10.5" fill="#6cb33f"/></svg><div class="t" style="left:1501px;top:806px;height:26px;line-height:26px;">local.properties</div><svg class="a" style="left:1479px;top:835px;" width="18" height="18" viewBox="0 0 18 18"><path d="M7 2.5 H11 V12 A4 4 0 0 1 3.5 14" fill="none" stroke="#3d8fd1" stroke-width="3"/><rect x="13" y="2.5" width="3" height="14" fill="#3d8fd1"/><circle cx="3" cy="8" r="2.2" fill="#e8892c"/></svg><div class="t" style="left:1501px;top:832px;height:26px;line-height:26px;">MatDemo.iml</div><svg class="a" style="left:1479px;top:861px;" width="18" height="18" viewBox="0 0 18 18"><path d="M15.5 5.5 A7.2 7.2 0 1 0 15.5 12.5" fill="none" stroke="#8cc152" stroke-width="2.6"/><circle cx="9" cy="9" r="3" fill="#2e9a48"/></svg><div class="t" style="left:1501px;top:858px;height:26px;line-height:26px;">settings.gradle</div><svg class="a" style="left:1432px;top:890px;" width="10" height="12" viewBox="0 0 10 12"><path d="M0 0.5 L10 6 L0 11.5 Z" fill="#a4a4a4"/></svg><svg class="a" style="left:1452px;top:888px;" width="20" height="17" viewBox="0 0 20 17"><rect x="0" y="4" width="4" height="13" fill="#888"/><rect x="5" y="2" width="4" height="15" fill="#999"/><rect x="10" y="0" width="4" height="17" fill="#e07070"/><rect x="15" y="5" width="4" height="12" fill="#6ba3d6"/></svg><div class="t" style="left:1477px;top:884px;height:26px;line-height:26px;">External Libraries</div><div class="a" style="left:25px;top:100px;width:2px;height:820px;background:#a9a9a9"></div><div class="a" style="left:404px;top:123px;width:474px;height:176px;border:1px dashed #3d8ee8;box-sizing:border-box"></div><div class="a" style="left:402px;top:121px;width:6px;height:6px;background:#fff;border:1px solid #666;box-sizing:border-box"></div><div class="a" style="left:639px;top:121px;width:6px;height:6px;background:#fff;border:1px solid #666;box-sizing:border-box"></div><div class="a" style="left:875px;top:121px;width:6px;height:6px;background:#fff;border:1px solid #666;box-sizing:border-box"></div><div class="a" style="left:402px;top:209px;width:6px;height:6px;background:#fff;border:1px solid #666;box-sizing:border-box"></div><div class="a" style="left:875px;top:209px;width:6px;height:6px;background:#fff;border:1px solid #666;box-sizing:border-box"></div><div class="a" style="left:402px;top:296px;width:6px;height:6px;background:#fff;border:1px solid #666;box-sizing:border-box"></div><div class="a" style="left:639px;top:296px;width:6px;height:6px;background:#fff;border:1px solid #666;box-sizing:border-box"></div><div class="a" style="left:875px;top:296px;width:6px;height:6px;background:#fff;border:1px solid #666;box-sizing:border-box"></div><div class="a" style="left:771px;top:126px;width:1px;height:40px;background:#000"></div><div class="t" style="left:407px;top:134px;font-size:23px;line-height:27px;color:#ee1c25;-webkit-text-stroke:0.35px #ee1c25;">总数</div><div class="t" style="left:467px;top:134px;font-size:23px;line-height:27px;color:#ee1c25;-webkit-text-stroke:0.35px #ee1c25;">堆大小</div><div class="t" style="left:542px;top:134px;font-size:23px;line-height:27px;color:#ee1c25;-webkit-text-stroke:0.35px #ee1c25;">大小</div><div class="t" style="left:595px;top:134px;font-size:23px;line-height:27px;color:#ee1c25;-webkit-text-stroke:0.35px #ee1c25;">浅堆大小</div><div class="t" style="left:701px;top:134px;font-size:23px;line-height:27px;color:#ee1c25;-webkit-text-stroke:0.35px #ee1c25;">保留堆大小</div><div class="t" style="left:1133px;top:134px;font-size:21px;line-height:25px;color:#f03a42;-webkit-text-stroke:0.35px #f03a42;-webkit-text-stroke:0">深度</div><div class="t" style="left:1193px;top:141px;font-size:23px;line-height:27px;color:#ee1c25;-webkit-text-stroke:0.35px #ee1c25;">浅堆大小</div><div class="t" style="left:1289px;top:135px;font-size:23px;line-height:27px;color:#ee1c25;-webkit-text-stroke:0.35px #ee1c25;">支配内存大小</div><svg class="a" style="left:1755px;top:875px;" width="142" height="45" viewBox="0 0 142 45"><g fill="none" stroke="#d9231e" stroke-width="4.2" stroke-linecap="butt"><path d="M8 9 H26 A5.2 5.2 0 0 1 26 19.5 H14 A6.5 6.5 0 0 0 7.5 26 V36 H52"/><path d="M69 18 H44 A9 9 0 0 0 44 36"/><path d="M60 6 V29 A7 7 0 0 0 67 36 H82"/><circle cx="82.2" cy="26.7" r="9.2"/></g><rect x="92.3" y="34" width="4" height="4.4" fill="#d9231e"/><g fill="none" stroke="#d9231e" stroke-width="2.8"><path d="M107.5 28 H103 A4.8 4.8 0 0 0 103 37.2 H107.5"/><circle cx="115" cy="32.5" r="4.8"/><path d="M122.5 38.5 V30.5 A3.5 3.5 0 0 1 129.5 30.5 V38.5 M129.5 30.5 A3.5 3.5 0 0 1 136.5 30.5 V38.5"/></g></svg><div class="t" style="left:1850px;top:886px;font-size:11px;line-height:14px;color:#333;letter-spacing:-0.5px">红黑联盟</div><div class="a" style="left:0px;top:920px;width:1897px;height:4px;background:#efefef"></div></body></html>
